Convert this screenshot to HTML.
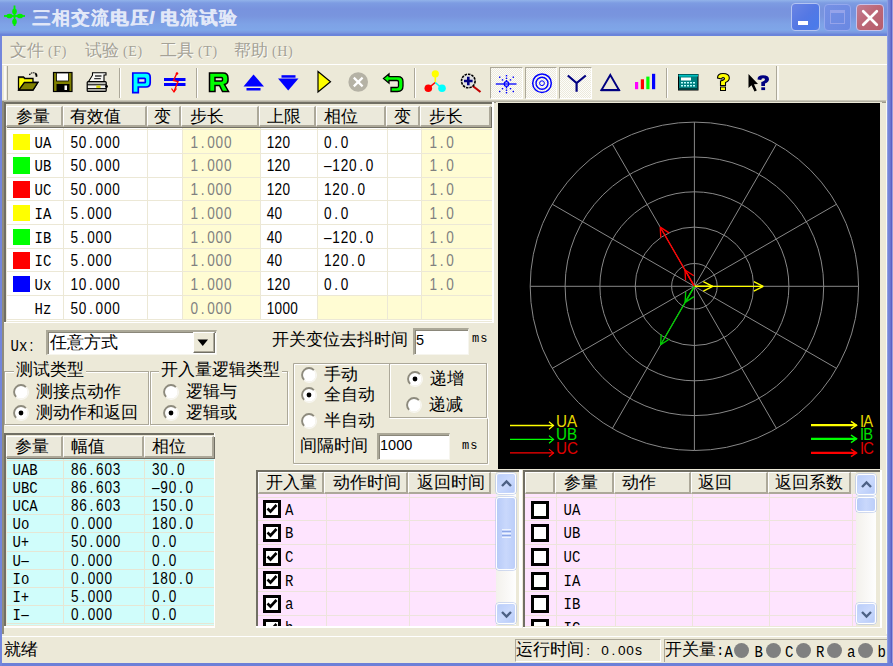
<!DOCTYPE html><html><head><meta charset="utf-8"><style>
html,body{margin:0;padding:0;}
body{width:893px;height:666px;overflow:hidden;position:relative;background:#ece9d8;font-family:'Liberation Sans',sans-serif;font-size:16.6px;color:#000;}
div{box-sizing:border-box;}
.hd{position:absolute;background:#ebe9db;border-top:1px solid #fff;border-left:1px solid #fff;border-right:2px solid #aca899;border-bottom:2px solid #aca899;box-shadow:1px 1px 0 #716f64;}
.m{font-family:'Liberation Mono',monospace;font-size:14px;}
.s{font-family:'Liberation Sans',sans-serif;font-size:14px;}
</style></head><body>
<div style="position:absolute;left:0px;top:0px;width:893px;height:666px;background:#7b8fe0;"></div>
<div style="position:absolute;left:1.5px;top:36px;width:885.5px;height:627px;background:#ece9d8;"></div>
<div style="position:absolute;left:0px;top:0px;width:887px;height:36px;background:linear-gradient(to bottom,#92b3ea 0px,#7d9ce2 3px,#7893de 9px,#7995de 16px,#7ea2e6 24px,#7fa6e8 30px,#7a98e0 32.5px,#6a84da 34.5px,#6a84da 36px);"></div>
<svg style="position:absolute;left:0;top:0" width="30" height="32" viewBox="0 0 30 32">
<g fill="#00ee00">
<rect x="13.6" y="5.5" width="1.8" height="20.5"/>
<rect x="4" y="15.1" width="21" height="1.8"/>
<ellipse cx="14.5" cy="11.5" rx="2.3" ry="3"/>
<ellipse cx="14.5" cy="21.7" rx="2.3" ry="3"/>
<ellipse cx="9.5" cy="16" rx="3" ry="2.3"/>
<ellipse cx="20" cy="16" rx="3" ry="2.3"/>
</g></svg>
<div style="position:absolute;left:32px;top:7.2px;white-space:nowrap;line-height:22px;font-size:17.8px;font-weight:bold;color:#e2e8f8;letter-spacing:1.6px;text-shadow:0.6px 0 0 #e2e8f8;">三相交流电压<span style='font-size:19px;margin-left:-0.5px;margin-right:4px'>/</span>电流试验</div>
<div style="position:absolute;left:791.2px;top:3.2px;width:29.2px;height:28.2px;border:1.5px solid #b3c4f2;border-radius:4px;background:linear-gradient(135deg,#6a84e4 0%,#5478e4 50%,#4a7aea 85%,#5a7de0 100%);"></div>
<div style="position:absolute;left:798px;top:21px;width:10px;height:4px;background:#fff;"></div>
<div style="position:absolute;left:824.1px;top:3.7px;width:27px;height:27.4px;border:1.5px solid #94a8ee;border-radius:4px;background:linear-gradient(135deg,#7590e4,#6a88e2);"></div>
<div style="position:absolute;left:830.2px;top:9.8px;width:15.1px;height:14.7px;border:1.5px solid #95a3ea;border-top:3px solid #95a3ea;"></div>
<div style="position:absolute;left:856px;top:3.7px;width:27.8px;height:27.4px;border:1.5px solid #c8c2ea;border-radius:4px;background:linear-gradient(135deg,#c27d92 0%,#bd6878 45%,#b65d6b 100%);"></div>
<svg style="position:absolute;left:856px;top:3.7px" width="28" height="28" viewBox="0 0 28 28"><path d="M7.2 7.2 L20.8 20.8 M20.8 7.2 L7.2 20.8" stroke="#fff" stroke-width="2.7" stroke-linecap="round"/></svg>
<div style="position:absolute;left:10px;top:42.5px;white-space:nowrap;line-height:16px;color:#a4a196;text-shadow:0.6px 0.6px 0 #fbfbf6;">文件<span style="font-family:'Liberation Serif';font-size:14px;margin-left:4px;letter-spacing:0.6px;">(F)</span></div>
<div style="position:absolute;left:85px;top:42.5px;white-space:nowrap;line-height:16px;color:#a4a196;text-shadow:0.6px 0.6px 0 #fbfbf6;">试验<span style="font-family:'Liberation Serif';font-size:14px;margin-left:4px;letter-spacing:0.6px;">(E)</span></div>
<div style="position:absolute;left:160px;top:42.5px;white-space:nowrap;line-height:16px;color:#a4a196;text-shadow:0.6px 0.6px 0 #fbfbf6;">工具<span style="font-family:'Liberation Serif';font-size:14px;margin-left:4px;letter-spacing:0.6px;">(T)</span></div>
<div style="position:absolute;left:234px;top:42.5px;white-space:nowrap;line-height:16px;color:#a4a196;text-shadow:0.6px 0.6px 0 #fbfbf6;">帮助<span style="font-family:'Liberation Serif';font-size:14px;margin-left:4px;letter-spacing:0.6px;">(H)</span></div>
<div style="position:absolute;left:1.5px;top:64px;width:885.5px;height:1px;background:#fff;"></div>
<div style="position:absolute;left:3.8px;top:66px;width:2.6px;height:34px;background:#fbfaf4;"></div>
<div style="position:absolute;left:6.5px;top:66px;width:1px;height:34px;background:#aca899;"></div>
<div style="position:absolute;left:1.5px;top:100.3px;width:884.5px;height:2.7px;background:linear-gradient(to bottom,#d6d3c4,#8f8c7e);"></div>
<div style="position:absolute;left:119px;top:68px;width:1px;height:30px;background:#aca899;"></div>
<div style="position:absolute;left:120px;top:68px;width:1px;height:30px;background:#fff;"></div>
<div style="position:absolute;left:196px;top:68px;width:1px;height:30px;background:#aca899;"></div>
<div style="position:absolute;left:197px;top:68px;width:1px;height:30px;background:#fff;"></div>
<div style="position:absolute;left:413.5px;top:68px;width:1px;height:30px;background:#aca899;"></div>
<div style="position:absolute;left:414.5px;top:68px;width:1px;height:30px;background:#fff;"></div>
<div style="position:absolute;left:666px;top:68px;width:1px;height:30px;background:#aca899;"></div>
<div style="position:absolute;left:667px;top:68px;width:1px;height:30px;background:#fff;"></div>
<div style="position:absolute;left:776.3px;top:66px;width:1px;height:34px;background:#aca899;"></div>
<div style="position:absolute;left:777.3px;top:66px;width:1.6px;height:34px;background:#fbfaf4;"></div>
<div style="position:absolute;left:490px;top:67px;width:32.5px;height:32px;background:repeating-conic-gradient(#fdfdfa 0 25%,#ece9dc 0 50%) 0 0/2px 2px;border:1px solid #fff;border-top-color:#aca899;border-left-color:#aca899;"></div>
<div style="position:absolute;left:524.5px;top:67px;width:32.5px;height:32px;background:repeating-conic-gradient(#fdfdfa 0 25%,#ece9dc 0 50%) 0 0/2px 2px;border:1px solid #fff;border-top-color:#aca899;border-left-color:#aca899;"></div>
<div style="position:absolute;left:559px;top:67px;width:32.5px;height:32px;background:repeating-conic-gradient(#fdfdfa 0 25%,#ece9dc 0 50%) 0 0/2px 2px;border:1px solid #fff;border-top-color:#aca899;border-left-color:#aca899;"></div>
<svg style="position:absolute;left:0;top:0" width="893" height="110" viewBox="0 0 893 110">
<!-- folder -->
<path d="M18.5 77 L23.5 77 L24.8 78.3 L33 78.3 L33 82.5 L37.8 82.5 L33 90 L18.5 90 Z" fill="#808000" stroke="#000" stroke-width="1.3"/>
<path d="M19.3 78.2 L23.2 78.2 L24.4 79.4 L32.2 79.4 L32.2 82 L24.2 82 L19.3 88.5 Z" fill="#ffff00"/>
<path d="M24.4 82.5 L37.8 82.5 L33 90 L18.8 90 Z" fill="#808000" stroke="#000" stroke-width="1.3"/>
<path d="M29.3 74.8 Q32 71.8 35.2 73.2" fill="none" stroke="#000" stroke-width="1.1" stroke-dasharray="1.5 0.7"/>
<path d="M35.2 73.2 Q37 74.5 36.3 76.8" fill="none" stroke="#000" stroke-width="1.8"/>
<!-- floppy -->
<rect x="53.5" y="72.5" width="18.5" height="19" fill="#808000" stroke="#000" stroke-width="1.2"/>
<rect x="56.5" y="73" width="12" height="8" fill="#fff" stroke="#000" stroke-width="0.8"/>
<rect x="56.5" y="84" width="13" height="7.5" fill="#000"/>
<rect x="64.5" y="85.5" width="2.5" height="4.5" fill="#fff"/>
<!-- printer -->
<path d="M92.5 72.8 L106 72.8 L106 75 L104 75 L104 81.5 L88.6 81.5 L92.5 75.2 Z" fill="#f8f8f4" stroke="#000" stroke-width="1.1"/>
<path d="M95 76 L101.5 76 M94.2 78.6 L100.8 78.6" stroke="#333" stroke-width="1.3"/>
<rect x="87.2" y="81.6" width="19" height="9.8" rx="1" fill="#c4c4bc" stroke="#000" stroke-width="1.2"/>
<rect x="88" y="85.2" width="17.5" height="3" fill="#f4f4ee"/>
<path d="M87.2 84.8 L106.2 84.8 M87.2 88.6 L106.2 88.6" stroke="#000" stroke-width="1"/>
<rect x="96.3" y="85.6" width="4.2" height="2.3" fill="#d4d400"/>
<circle cx="106.5" cy="86.5" r="1.4" fill="#000"/>
<!-- P -->
<path d="M132.8 73 L146 73 Q150.2 73 150.2 77.2 L150.2 82.8 Q150.2 87 146 87 L138.3 87 L138.3 92.6 L132.8 92.6 Z M138.3 78.3 L138.3 82.7 L144.6 82.7 Q145.3 82.7 145.3 82 L145.3 79 Q145.3 78.3 144.6 78.3 Z" fill="#00ffff" stroke="#0000ff" stroke-width="1.7" fill-rule="evenodd"/>
<!-- not-equal with lightning -->
<rect x="164" y="78" width="21.5" height="3" fill="#0000ff"/>
<rect x="164" y="83" width="21.5" height="3" fill="#0000ff"/>
<path d="M177 73 L173.5 80.5 L178 81.5 L174 91.5" fill="none" stroke="#ff0000" stroke-width="1.4"/>
<circle cx="177" cy="73.5" r="1.3" fill="#ff0000"/>
<path d="M171.5 88.5 L174 92 L176.5 88.5" fill="none" stroke="#ff0000" stroke-width="1.2"/>
<!-- R -->
<path d="M209.5 73 L223 73 Q228 73 228 78 L228 80.5 Q228 83.5 224.5 84.5 L228.5 91.5 L222.5 91.5 L219.5 85.5 L215 85.5 L215 91.5 L209.5 91.5 Z M215 77.5 L215 81 L221.5 81 Q222.5 81 222.5 80 L222.5 78.5 Q222.5 77.5 221.5 77.5 Z" fill="#00ff00" stroke="#000" stroke-width="1.5" fill-rule="evenodd"/>
<!-- up -->
<path d="M253.5 74.5 L264 86.5 L243.5 86.5 Z" fill="#0000ff"/>
<rect x="246.5" y="88" width="14" height="2.5" fill="#0000ff"/>
<!-- down -->
<rect x="281.5" y="75.2" width="14" height="2.5" fill="#0000ff"/>
<path d="M278 78.5 L298.5 78.5 L288.2 90.5 Z" fill="#0000ff"/>
<!-- play -->
<path d="M318 71.5 L330.5 81.8 L318 92 Z" fill="#ffff00" stroke="#000" stroke-width="1.2"/>
<!-- stop circle -->
<circle cx="358.2" cy="82" r="9.8" fill="#b5b2a5"/>
<path d="M353.8 77.6 L362.6 86.4 M362.6 77.6 L353.8 86.4" stroke="#fff" stroke-width="2.2"/>
<!-- return arrow -->
<path d="M383.5 78.5 L389 73.8 L389 76.6 L398 76.6 Q403 76.6 403 81.5 L403 86 Q403 91.5 397.5 91.5 L391 91.5 L391 87.5 L397 87.5 Q398.5 87.5 398.5 86 L398.5 81.8 Q398.5 80.5 397 80.5 L389 80.5 L389 83.2 Z" fill="#00ff00" stroke="#000" stroke-width="1.3"/>
<!-- tree -->
<path d="M435.3 74 L435.3 82.5" stroke="#ffff00" stroke-width="1.6"/>
<path d="M435.3 82.5 L428.3 88.2" stroke="#ff0000" stroke-width="1.6"/>
<path d="M435.3 82.5 L442 88.3" stroke="#00ffff" stroke-width="1.6"/>
<circle cx="435.3" cy="73.8" r="3.6" fill="#ffff00"/>
<circle cx="428.3" cy="88.2" r="3.8" fill="#ff0000"/>
<circle cx="442" cy="88.3" r="3.8" fill="#00ffff"/>
<!-- zoom -->
<path d="M471.5 85 L480.5 92" stroke="#c00000" stroke-width="2.2"/>
<circle cx="468.3" cy="81" r="6.8" fill="#e0e0e0" stroke="#000" stroke-width="1.6" stroke-dasharray="2.5 1"/>
<path d="M464 81 L472.6 81 M468.3 76.8 L468.3 85.2" stroke="#000080" stroke-width="2.6"/>
<!-- star (pressed) -->
<path d="M495.8 84 L516.5 84" stroke="#0000ff" stroke-width="1.3"/>
<circle cx="506.5" cy="84" r="2.3" fill="none" stroke="#0000ff" stroke-width="1.2"/>
<g fill="#0000ff">
<rect x="505.8" y="75" width="1.4" height="1.4"/><rect x="505.8" y="77.6" width="1.4" height="1.4"/><rect x="505.8" y="80" width="1.4" height="1.4"/>
<rect x="505.8" y="87" width="1.4" height="1.4"/><rect x="505.8" y="89.5" width="1.4" height="1.4"/><rect x="505.8" y="92" width="1.4" height="1.4"/>
<rect x="499" y="76.5" width="1.4" height="1.4"/><rect x="512.6" y="76.5" width="1.4" height="1.4"/>
<rect x="501.8" y="79.2" width="1.4" height="1.4"/><rect x="509.8" y="79.2" width="1.4" height="1.4"/>
<rect x="501.8" y="88" width="1.4" height="1.4"/><rect x="509.8" y="88" width="1.4" height="1.4"/>
<rect x="499" y="90.8" width="1.4" height="1.4"/><rect x="512.6" y="90.8" width="1.4" height="1.4"/>
</g>
<!-- concentric -->
<circle cx="542" cy="83.2" r="9.3" fill="none" stroke="#0000ff" stroke-width="1.5"/>
<circle cx="542" cy="83.2" r="6" fill="none" stroke="#0000ff" stroke-width="1.4"/>
<circle cx="542" cy="83.2" r="2.4" fill="none" stroke="#0000ff" stroke-width="1"/>
<!-- Y -->
<path d="M567.8 75.5 L576.6 83 L585.8 75.5 M576.6 83 L576.6 91.8" fill="none" stroke="#000080" stroke-width="2.2"/>
<!-- triangle -->
<path d="M610.3 75 L619 90 L601.5 90 Z" fill="none" stroke="#000080" stroke-width="1.9"/>
<rect x="600.8" y="89" width="19" height="2.2" fill="#000080"/>
<!-- bars -->
<rect x="635" y="82" width="3.2" height="7.2" fill="#ff00ff"/>
<rect x="640.8" y="79.3" width="3.2" height="9.9" fill="#ff0000"/>
<rect x="646.3" y="76.6" width="3.2" height="12.6" fill="#00ff00"/>
<rect x="652" y="73.8" width="3.2" height="15.4" fill="#0000ff"/>
<!-- calculator -->
<rect x="678.5" y="74.5" width="19.5" height="15.5" fill="#008080" stroke="#000" stroke-width="1"/>
<rect x="678.5" y="74.5" width="19.5" height="2" fill="#00c0c0"/>
<rect x="681" y="77.5" width="10" height="3" fill="#fff"/>
<g fill="#c0ffff"><rect x="681" y="82" width="2" height="1.5"/><rect x="684" y="82" width="2" height="1.5"/><rect x="687" y="82" width="2" height="1.5"/><rect x="690" y="82" width="2" height="1.5"/><rect x="693" y="82" width="2" height="1.5"/>
<rect x="681" y="85" width="2" height="1.5"/><rect x="684" y="85" width="2" height="1.5"/><rect x="687" y="85" width="2" height="1.5"/><rect x="690" y="85" width="2" height="1.5"/><rect x="693" y="85" width="2" height="1.5"/></g>
<rect x="678.5" y="88" width="19.5" height="2" fill="#004040"/>
<!-- yellow ? -->
<path d="M717.5 78 Q717.5 73.5 723 73.5 Q729.3 73.5 729.3 78 Q729.3 81 725.5 82.5 L725.5 85.5 L720.5 85.5 L720.5 81 Q724.5 80 724.5 78.5 Q724.5 77.5 723 77.5 Q721.8 77.5 721.8 79 Z" fill="#ffff00" stroke="#000" stroke-width="1.1"/>
<rect x="720.5" y="87" width="5" height="3.5" fill="#ffff00" stroke="#000" stroke-width="1"/>
<!-- pointer ? -->
<path d="M748.5 74 L748.5 88 L751.5 85.2 L754.5 91.5 L756.8 90.5 L754 84.3 L758 84 Z" fill="#000"/>
<path d="M757.5 79.5 Q757.5 75.3 763 75.3 Q769 75.3 769 79.3 Q769 82 765 83.5 L765 86 L761.3 86 L761.3 82 Q765 81 765 79.5 Q765 78.3 763 78.3 Q761.3 78.3 761.3 80 Z" fill="#000080"/>
<rect x="761.3" y="87.3" width="3.8" height="2.8" fill="#000080"/>
</svg>
<div style="position:absolute;left:2.2px;top:101px;width:1.6px;height:533px;background:#8f8c7e;"></div>
<div style="position:absolute;left:4px;top:102px;width:490px;height:221px;background:#ece9d8;border-left:2.5px solid #716f64;border-top:2.5px solid #716f64;box-shadow:inset 0 0 0 0 #000;"></div>
<div style="position:absolute;left:492px;top:102px;width:2px;height:221px;background:#fff;"></div>
<div style="position:absolute;left:4px;top:321.5px;width:490px;height:1.5px;background:#fff;"></div>
<div style="position:absolute;left:6.5px;top:127px;width:485.5px;height:193.5px;background:#fff;"></div>
<div style="position:absolute;left:181.5px;top:127px;width:78px;height:193px;background:#fffcd3;"></div>
<div style="position:absolute;left:420.5px;top:127px;width:71.5px;height:193px;background:#fffcd3;"></div>
<div style="position:absolute;left:316.5px;top:296.1px;width:175.5px;height:24px;background:#fffcd3;"></div>
<div style="position:absolute;left:6.5px;top:129.3px;width:485.5px;height:1px;background:#ece8d6;"></div>
<div style="position:absolute;left:6.5px;top:152.98px;width:485.5px;height:1px;background:#ece8d6;"></div>
<div style="position:absolute;left:6.5px;top:176.66px;width:485.5px;height:1px;background:#ece8d6;"></div>
<div style="position:absolute;left:6.5px;top:200.34px;width:485.5px;height:1px;background:#ece8d6;"></div>
<div style="position:absolute;left:6.5px;top:224.02px;width:485.5px;height:1px;background:#ece8d6;"></div>
<div style="position:absolute;left:6.5px;top:247.7px;width:485.5px;height:1px;background:#ece8d6;"></div>
<div style="position:absolute;left:6.5px;top:271.38px;width:485.5px;height:1px;background:#ece8d6;"></div>
<div style="position:absolute;left:6.5px;top:295.06px;width:485.5px;height:1px;background:#ece8d6;"></div>
<div style="position:absolute;left:6.5px;top:318.74px;width:485.5px;height:1px;background:#ece8d6;"></div>
<div style="position:absolute;left:63.3px;top:127px;width:1px;height:193px;background:#ece8d6;"></div>
<div style="position:absolute;left:147px;top:127px;width:1px;height:193px;background:#ece8d6;"></div>
<div style="position:absolute;left:181.5px;top:127px;width:1px;height:193px;background:#ece8d6;"></div>
<div style="position:absolute;left:259.5px;top:127px;width:1px;height:193px;background:#ece8d6;"></div>
<div style="position:absolute;left:316.5px;top:127px;width:1px;height:193px;background:#ece8d6;"></div>
<div style="position:absolute;left:386.5px;top:127px;width:1px;height:193px;background:#ece8d6;"></div>
<div style="position:absolute;left:420.5px;top:127px;width:1px;height:193px;background:#ece8d6;"></div>
<div class="hd" style="left:6px;top:105.5px;width:56.5px;height:21.5px;"></div>
<div style="position:absolute;left:15.5px;top:108.8px;white-space:nowrap;line-height:16px;font-size:16.6px;">参量</div>
<div class="hd" style="left:62.5px;top:105.5px;width:84.0px;height:21.5px;"></div>
<div style="position:absolute;left:70px;top:108.8px;white-space:nowrap;line-height:16px;font-size:16.6px;">有效值</div>
<div class="hd" style="left:146.5px;top:105.5px;width:34.0px;height:21.5px;"></div>
<div style="position:absolute;left:154px;top:108.8px;white-space:nowrap;line-height:16px;font-size:16.6px;">变</div>
<div class="hd" style="left:180.5px;top:105.5px;width:78.0px;height:21.5px;"></div>
<div style="position:absolute;left:190px;top:108.8px;white-space:nowrap;line-height:16px;font-size:16.6px;">步长</div>
<div class="hd" style="left:258.5px;top:105.5px;width:57.0px;height:21.5px;"></div>
<div style="position:absolute;left:267px;top:108.8px;white-space:nowrap;line-height:16px;font-size:16.6px;">上限</div>
<div class="hd" style="left:315.5px;top:105.5px;width:70.0px;height:21.5px;"></div>
<div style="position:absolute;left:324px;top:108.8px;white-space:nowrap;line-height:16px;font-size:16.6px;">相位</div>
<div class="hd" style="left:385.5px;top:105.5px;width:34.0px;height:21.5px;"></div>
<div style="position:absolute;left:394px;top:108.8px;white-space:nowrap;line-height:16px;font-size:16.6px;">变</div>
<div class="hd" style="left:419.5px;top:105.5px;width:71.0px;height:21.5px;"></div>
<div style="position:absolute;left:429px;top:108.8px;white-space:nowrap;line-height:16px;font-size:16.6px;">步长</div>
<div style="position:absolute;left:12.5px;top:133.8px;width:17px;height:16.5px;background:#ffff00;"></div>
<div style="position:absolute;left:34.5px;top:133.8px;white-space:nowrap;line-height:16px;transform:scaleY(1.17);"><span style="display:inline-block;width:8.4px;text-align:center;font-family:'Liberation Mono',monospace;font-size:14px;">U</span><span style="display:inline-block;width:8.4px;text-align:center;font-family:'Liberation Mono',monospace;font-size:14px;">A</span></div>
<div style="position:absolute;left:70px;top:133.8px;white-space:nowrap;line-height:16px;transform:scaleY(1.17);"><span style="display:inline-block;width:8.4px;text-align:center;font-family:'Liberation Sans',sans-serif;font-size:13.6px;">5</span><span style="display:inline-block;width:8.4px;text-align:center;font-family:'Liberation Sans',sans-serif;font-size:13.6px;">0</span><span style="display:inline-block;width:8.4px;text-align:center;font-family:'Liberation Sans',sans-serif;font-size:13.6px;">.</span><span style="display:inline-block;width:8.4px;text-align:center;font-family:'Liberation Sans',sans-serif;font-size:13.6px;">0</span><span style="display:inline-block;width:8.4px;text-align:center;font-family:'Liberation Sans',sans-serif;font-size:13.6px;">0</span><span style="display:inline-block;width:8.4px;text-align:center;font-family:'Liberation Sans',sans-serif;font-size:13.6px;">0</span></div>
<div style="position:absolute;left:190px;top:133.8px;white-space:nowrap;line-height:16px;transform:scaleY(1.17);color:#808080;"><span style="display:inline-block;width:8.4px;text-align:center;font-family:'Liberation Sans',sans-serif;font-size:13.6px;">1</span><span style="display:inline-block;width:8.4px;text-align:center;font-family:'Liberation Sans',sans-serif;font-size:13.6px;">.</span><span style="display:inline-block;width:8.4px;text-align:center;font-family:'Liberation Sans',sans-serif;font-size:13.6px;">0</span><span style="display:inline-block;width:8.4px;text-align:center;font-family:'Liberation Sans',sans-serif;font-size:13.6px;">0</span><span style="display:inline-block;width:8.4px;text-align:center;font-family:'Liberation Sans',sans-serif;font-size:13.6px;">0</span></div>
<div style="position:absolute;left:266.5px;top:133.8px;white-space:nowrap;line-height:16px;transform:scaleY(1.17);"><span style="display:inline-block;width:7.9px;text-align:center;font-family:'Liberation Sans',sans-serif;font-size:13.6px;">1</span><span style="display:inline-block;width:7.9px;text-align:center;font-family:'Liberation Sans',sans-serif;font-size:13.6px;">2</span><span style="display:inline-block;width:7.9px;text-align:center;font-family:'Liberation Sans',sans-serif;font-size:13.6px;">0</span></div>
<div style="position:absolute;left:323.5px;top:133.8px;white-space:nowrap;line-height:16px;transform:scaleY(1.17);"><span style="display:inline-block;width:8.4px;text-align:center;font-family:'Liberation Sans',sans-serif;font-size:13.6px;">0</span><span style="display:inline-block;width:8.4px;text-align:center;font-family:'Liberation Sans',sans-serif;font-size:13.6px;">.</span><span style="display:inline-block;width:8.4px;text-align:center;font-family:'Liberation Sans',sans-serif;font-size:13.6px;">0</span></div>
<div style="position:absolute;left:429px;top:133.8px;white-space:nowrap;line-height:16px;transform:scaleY(1.17);color:#808080;"><span style="display:inline-block;width:8.4px;text-align:center;font-family:'Liberation Sans',sans-serif;font-size:13.6px;">1</span><span style="display:inline-block;width:8.4px;text-align:center;font-family:'Liberation Sans',sans-serif;font-size:13.6px;">.</span><span style="display:inline-block;width:8.4px;text-align:center;font-family:'Liberation Sans',sans-serif;font-size:13.6px;">0</span></div>
<div style="position:absolute;left:12.5px;top:157.48px;width:17px;height:16.5px;background:#00ff00;"></div>
<div style="position:absolute;left:34.5px;top:157.48px;white-space:nowrap;line-height:16px;transform:scaleY(1.17);"><span style="display:inline-block;width:8.4px;text-align:center;font-family:'Liberation Mono',monospace;font-size:14px;">U</span><span style="display:inline-block;width:8.4px;text-align:center;font-family:'Liberation Mono',monospace;font-size:14px;">B</span></div>
<div style="position:absolute;left:70px;top:157.48px;white-space:nowrap;line-height:16px;transform:scaleY(1.17);"><span style="display:inline-block;width:8.4px;text-align:center;font-family:'Liberation Sans',sans-serif;font-size:13.6px;">5</span><span style="display:inline-block;width:8.4px;text-align:center;font-family:'Liberation Sans',sans-serif;font-size:13.6px;">0</span><span style="display:inline-block;width:8.4px;text-align:center;font-family:'Liberation Sans',sans-serif;font-size:13.6px;">.</span><span style="display:inline-block;width:8.4px;text-align:center;font-family:'Liberation Sans',sans-serif;font-size:13.6px;">0</span><span style="display:inline-block;width:8.4px;text-align:center;font-family:'Liberation Sans',sans-serif;font-size:13.6px;">0</span><span style="display:inline-block;width:8.4px;text-align:center;font-family:'Liberation Sans',sans-serif;font-size:13.6px;">0</span></div>
<div style="position:absolute;left:190px;top:157.48px;white-space:nowrap;line-height:16px;transform:scaleY(1.17);color:#808080;"><span style="display:inline-block;width:8.4px;text-align:center;font-family:'Liberation Sans',sans-serif;font-size:13.6px;">1</span><span style="display:inline-block;width:8.4px;text-align:center;font-family:'Liberation Sans',sans-serif;font-size:13.6px;">.</span><span style="display:inline-block;width:8.4px;text-align:center;font-family:'Liberation Sans',sans-serif;font-size:13.6px;">0</span><span style="display:inline-block;width:8.4px;text-align:center;font-family:'Liberation Sans',sans-serif;font-size:13.6px;">0</span><span style="display:inline-block;width:8.4px;text-align:center;font-family:'Liberation Sans',sans-serif;font-size:13.6px;">0</span></div>
<div style="position:absolute;left:266.5px;top:157.48px;white-space:nowrap;line-height:16px;transform:scaleY(1.17);"><span style="display:inline-block;width:7.9px;text-align:center;font-family:'Liberation Sans',sans-serif;font-size:13.6px;">1</span><span style="display:inline-block;width:7.9px;text-align:center;font-family:'Liberation Sans',sans-serif;font-size:13.6px;">2</span><span style="display:inline-block;width:7.9px;text-align:center;font-family:'Liberation Sans',sans-serif;font-size:13.6px;">0</span></div>
<div style="position:absolute;left:323.5px;top:157.48px;white-space:nowrap;line-height:16px;transform:scaleY(1.17);"><span style="display:inline-block;width:8.4px;text-align:center;font-family:'Liberation Sans',sans-serif;font-size:13.6px;">&ndash;</span><span style="display:inline-block;width:8.4px;text-align:center;font-family:'Liberation Sans',sans-serif;font-size:13.6px;">1</span><span style="display:inline-block;width:8.4px;text-align:center;font-family:'Liberation Sans',sans-serif;font-size:13.6px;">2</span><span style="display:inline-block;width:8.4px;text-align:center;font-family:'Liberation Sans',sans-serif;font-size:13.6px;">0</span><span style="display:inline-block;width:8.4px;text-align:center;font-family:'Liberation Sans',sans-serif;font-size:13.6px;">.</span><span style="display:inline-block;width:8.4px;text-align:center;font-family:'Liberation Sans',sans-serif;font-size:13.6px;">0</span></div>
<div style="position:absolute;left:429px;top:157.48px;white-space:nowrap;line-height:16px;transform:scaleY(1.17);color:#808080;"><span style="display:inline-block;width:8.4px;text-align:center;font-family:'Liberation Sans',sans-serif;font-size:13.6px;">1</span><span style="display:inline-block;width:8.4px;text-align:center;font-family:'Liberation Sans',sans-serif;font-size:13.6px;">.</span><span style="display:inline-block;width:8.4px;text-align:center;font-family:'Liberation Sans',sans-serif;font-size:13.6px;">0</span></div>
<div style="position:absolute;left:12.5px;top:181.16px;width:17px;height:16.5px;background:#ff0000;"></div>
<div style="position:absolute;left:34.5px;top:181.16px;white-space:nowrap;line-height:16px;transform:scaleY(1.17);"><span style="display:inline-block;width:8.4px;text-align:center;font-family:'Liberation Mono',monospace;font-size:14px;">U</span><span style="display:inline-block;width:8.4px;text-align:center;font-family:'Liberation Mono',monospace;font-size:14px;">C</span></div>
<div style="position:absolute;left:70px;top:181.16px;white-space:nowrap;line-height:16px;transform:scaleY(1.17);"><span style="display:inline-block;width:8.4px;text-align:center;font-family:'Liberation Sans',sans-serif;font-size:13.6px;">5</span><span style="display:inline-block;width:8.4px;text-align:center;font-family:'Liberation Sans',sans-serif;font-size:13.6px;">0</span><span style="display:inline-block;width:8.4px;text-align:center;font-family:'Liberation Sans',sans-serif;font-size:13.6px;">.</span><span style="display:inline-block;width:8.4px;text-align:center;font-family:'Liberation Sans',sans-serif;font-size:13.6px;">0</span><span style="display:inline-block;width:8.4px;text-align:center;font-family:'Liberation Sans',sans-serif;font-size:13.6px;">0</span><span style="display:inline-block;width:8.4px;text-align:center;font-family:'Liberation Sans',sans-serif;font-size:13.6px;">0</span></div>
<div style="position:absolute;left:190px;top:181.16px;white-space:nowrap;line-height:16px;transform:scaleY(1.17);color:#808080;"><span style="display:inline-block;width:8.4px;text-align:center;font-family:'Liberation Sans',sans-serif;font-size:13.6px;">1</span><span style="display:inline-block;width:8.4px;text-align:center;font-family:'Liberation Sans',sans-serif;font-size:13.6px;">.</span><span style="display:inline-block;width:8.4px;text-align:center;font-family:'Liberation Sans',sans-serif;font-size:13.6px;">0</span><span style="display:inline-block;width:8.4px;text-align:center;font-family:'Liberation Sans',sans-serif;font-size:13.6px;">0</span><span style="display:inline-block;width:8.4px;text-align:center;font-family:'Liberation Sans',sans-serif;font-size:13.6px;">0</span></div>
<div style="position:absolute;left:266.5px;top:181.16px;white-space:nowrap;line-height:16px;transform:scaleY(1.17);"><span style="display:inline-block;width:7.9px;text-align:center;font-family:'Liberation Sans',sans-serif;font-size:13.6px;">1</span><span style="display:inline-block;width:7.9px;text-align:center;font-family:'Liberation Sans',sans-serif;font-size:13.6px;">2</span><span style="display:inline-block;width:7.9px;text-align:center;font-family:'Liberation Sans',sans-serif;font-size:13.6px;">0</span></div>
<div style="position:absolute;left:323.5px;top:181.16px;white-space:nowrap;line-height:16px;transform:scaleY(1.17);"><span style="display:inline-block;width:8.4px;text-align:center;font-family:'Liberation Sans',sans-serif;font-size:13.6px;">1</span><span style="display:inline-block;width:8.4px;text-align:center;font-family:'Liberation Sans',sans-serif;font-size:13.6px;">2</span><span style="display:inline-block;width:8.4px;text-align:center;font-family:'Liberation Sans',sans-serif;font-size:13.6px;">0</span><span style="display:inline-block;width:8.4px;text-align:center;font-family:'Liberation Sans',sans-serif;font-size:13.6px;">.</span><span style="display:inline-block;width:8.4px;text-align:center;font-family:'Liberation Sans',sans-serif;font-size:13.6px;">0</span></div>
<div style="position:absolute;left:429px;top:181.16px;white-space:nowrap;line-height:16px;transform:scaleY(1.17);color:#808080;"><span style="display:inline-block;width:8.4px;text-align:center;font-family:'Liberation Sans',sans-serif;font-size:13.6px;">1</span><span style="display:inline-block;width:8.4px;text-align:center;font-family:'Liberation Sans',sans-serif;font-size:13.6px;">.</span><span style="display:inline-block;width:8.4px;text-align:center;font-family:'Liberation Sans',sans-serif;font-size:13.6px;">0</span></div>
<div style="position:absolute;left:12.5px;top:204.84px;width:17px;height:16.5px;background:#ffff00;"></div>
<div style="position:absolute;left:34.5px;top:204.84px;white-space:nowrap;line-height:16px;transform:scaleY(1.17);"><span style="display:inline-block;width:8.4px;text-align:center;font-family:'Liberation Mono',monospace;font-size:14px;">I</span><span style="display:inline-block;width:8.4px;text-align:center;font-family:'Liberation Mono',monospace;font-size:14px;">A</span></div>
<div style="position:absolute;left:70px;top:204.84px;white-space:nowrap;line-height:16px;transform:scaleY(1.17);"><span style="display:inline-block;width:8.4px;text-align:center;font-family:'Liberation Sans',sans-serif;font-size:13.6px;">5</span><span style="display:inline-block;width:8.4px;text-align:center;font-family:'Liberation Sans',sans-serif;font-size:13.6px;">.</span><span style="display:inline-block;width:8.4px;text-align:center;font-family:'Liberation Sans',sans-serif;font-size:13.6px;">0</span><span style="display:inline-block;width:8.4px;text-align:center;font-family:'Liberation Sans',sans-serif;font-size:13.6px;">0</span><span style="display:inline-block;width:8.4px;text-align:center;font-family:'Liberation Sans',sans-serif;font-size:13.6px;">0</span></div>
<div style="position:absolute;left:190px;top:204.84px;white-space:nowrap;line-height:16px;transform:scaleY(1.17);color:#808080;"><span style="display:inline-block;width:8.4px;text-align:center;font-family:'Liberation Sans',sans-serif;font-size:13.6px;">1</span><span style="display:inline-block;width:8.4px;text-align:center;font-family:'Liberation Sans',sans-serif;font-size:13.6px;">.</span><span style="display:inline-block;width:8.4px;text-align:center;font-family:'Liberation Sans',sans-serif;font-size:13.6px;">0</span><span style="display:inline-block;width:8.4px;text-align:center;font-family:'Liberation Sans',sans-serif;font-size:13.6px;">0</span><span style="display:inline-block;width:8.4px;text-align:center;font-family:'Liberation Sans',sans-serif;font-size:13.6px;">0</span></div>
<div style="position:absolute;left:266.5px;top:204.84px;white-space:nowrap;line-height:16px;transform:scaleY(1.17);"><span style="display:inline-block;width:7.9px;text-align:center;font-family:'Liberation Sans',sans-serif;font-size:13.6px;">4</span><span style="display:inline-block;width:7.9px;text-align:center;font-family:'Liberation Sans',sans-serif;font-size:13.6px;">0</span></div>
<div style="position:absolute;left:323.5px;top:204.84px;white-space:nowrap;line-height:16px;transform:scaleY(1.17);"><span style="display:inline-block;width:8.4px;text-align:center;font-family:'Liberation Sans',sans-serif;font-size:13.6px;">0</span><span style="display:inline-block;width:8.4px;text-align:center;font-family:'Liberation Sans',sans-serif;font-size:13.6px;">.</span><span style="display:inline-block;width:8.4px;text-align:center;font-family:'Liberation Sans',sans-serif;font-size:13.6px;">0</span></div>
<div style="position:absolute;left:429px;top:204.84px;white-space:nowrap;line-height:16px;transform:scaleY(1.17);color:#808080;"><span style="display:inline-block;width:8.4px;text-align:center;font-family:'Liberation Sans',sans-serif;font-size:13.6px;">1</span><span style="display:inline-block;width:8.4px;text-align:center;font-family:'Liberation Sans',sans-serif;font-size:13.6px;">.</span><span style="display:inline-block;width:8.4px;text-align:center;font-family:'Liberation Sans',sans-serif;font-size:13.6px;">0</span></div>
<div style="position:absolute;left:12.5px;top:228.52px;width:17px;height:16.5px;background:#00ff00;"></div>
<div style="position:absolute;left:34.5px;top:228.52px;white-space:nowrap;line-height:16px;transform:scaleY(1.17);"><span style="display:inline-block;width:8.4px;text-align:center;font-family:'Liberation Mono',monospace;font-size:14px;">I</span><span style="display:inline-block;width:8.4px;text-align:center;font-family:'Liberation Mono',monospace;font-size:14px;">B</span></div>
<div style="position:absolute;left:70px;top:228.52px;white-space:nowrap;line-height:16px;transform:scaleY(1.17);"><span style="display:inline-block;width:8.4px;text-align:center;font-family:'Liberation Sans',sans-serif;font-size:13.6px;">5</span><span style="display:inline-block;width:8.4px;text-align:center;font-family:'Liberation Sans',sans-serif;font-size:13.6px;">.</span><span style="display:inline-block;width:8.4px;text-align:center;font-family:'Liberation Sans',sans-serif;font-size:13.6px;">0</span><span style="display:inline-block;width:8.4px;text-align:center;font-family:'Liberation Sans',sans-serif;font-size:13.6px;">0</span><span style="display:inline-block;width:8.4px;text-align:center;font-family:'Liberation Sans',sans-serif;font-size:13.6px;">0</span></div>
<div style="position:absolute;left:190px;top:228.52px;white-space:nowrap;line-height:16px;transform:scaleY(1.17);color:#808080;"><span style="display:inline-block;width:8.4px;text-align:center;font-family:'Liberation Sans',sans-serif;font-size:13.6px;">1</span><span style="display:inline-block;width:8.4px;text-align:center;font-family:'Liberation Sans',sans-serif;font-size:13.6px;">.</span><span style="display:inline-block;width:8.4px;text-align:center;font-family:'Liberation Sans',sans-serif;font-size:13.6px;">0</span><span style="display:inline-block;width:8.4px;text-align:center;font-family:'Liberation Sans',sans-serif;font-size:13.6px;">0</span><span style="display:inline-block;width:8.4px;text-align:center;font-family:'Liberation Sans',sans-serif;font-size:13.6px;">0</span></div>
<div style="position:absolute;left:266.5px;top:228.52px;white-space:nowrap;line-height:16px;transform:scaleY(1.17);"><span style="display:inline-block;width:7.9px;text-align:center;font-family:'Liberation Sans',sans-serif;font-size:13.6px;">4</span><span style="display:inline-block;width:7.9px;text-align:center;font-family:'Liberation Sans',sans-serif;font-size:13.6px;">0</span></div>
<div style="position:absolute;left:323.5px;top:228.52px;white-space:nowrap;line-height:16px;transform:scaleY(1.17);"><span style="display:inline-block;width:8.4px;text-align:center;font-family:'Liberation Sans',sans-serif;font-size:13.6px;">&ndash;</span><span style="display:inline-block;width:8.4px;text-align:center;font-family:'Liberation Sans',sans-serif;font-size:13.6px;">1</span><span style="display:inline-block;width:8.4px;text-align:center;font-family:'Liberation Sans',sans-serif;font-size:13.6px;">2</span><span style="display:inline-block;width:8.4px;text-align:center;font-family:'Liberation Sans',sans-serif;font-size:13.6px;">0</span><span style="display:inline-block;width:8.4px;text-align:center;font-family:'Liberation Sans',sans-serif;font-size:13.6px;">.</span><span style="display:inline-block;width:8.4px;text-align:center;font-family:'Liberation Sans',sans-serif;font-size:13.6px;">0</span></div>
<div style="position:absolute;left:429px;top:228.52px;white-space:nowrap;line-height:16px;transform:scaleY(1.17);color:#808080;"><span style="display:inline-block;width:8.4px;text-align:center;font-family:'Liberation Sans',sans-serif;font-size:13.6px;">1</span><span style="display:inline-block;width:8.4px;text-align:center;font-family:'Liberation Sans',sans-serif;font-size:13.6px;">.</span><span style="display:inline-block;width:8.4px;text-align:center;font-family:'Liberation Sans',sans-serif;font-size:13.6px;">0</span></div>
<div style="position:absolute;left:12.5px;top:252.2px;width:17px;height:16.5px;background:#ff0000;"></div>
<div style="position:absolute;left:34.5px;top:252.2px;white-space:nowrap;line-height:16px;transform:scaleY(1.17);"><span style="display:inline-block;width:8.4px;text-align:center;font-family:'Liberation Mono',monospace;font-size:14px;">I</span><span style="display:inline-block;width:8.4px;text-align:center;font-family:'Liberation Mono',monospace;font-size:14px;">C</span></div>
<div style="position:absolute;left:70px;top:252.2px;white-space:nowrap;line-height:16px;transform:scaleY(1.17);"><span style="display:inline-block;width:8.4px;text-align:center;font-family:'Liberation Sans',sans-serif;font-size:13.6px;">5</span><span style="display:inline-block;width:8.4px;text-align:center;font-family:'Liberation Sans',sans-serif;font-size:13.6px;">.</span><span style="display:inline-block;width:8.4px;text-align:center;font-family:'Liberation Sans',sans-serif;font-size:13.6px;">0</span><span style="display:inline-block;width:8.4px;text-align:center;font-family:'Liberation Sans',sans-serif;font-size:13.6px;">0</span><span style="display:inline-block;width:8.4px;text-align:center;font-family:'Liberation Sans',sans-serif;font-size:13.6px;">0</span></div>
<div style="position:absolute;left:190px;top:252.2px;white-space:nowrap;line-height:16px;transform:scaleY(1.17);color:#808080;"><span style="display:inline-block;width:8.4px;text-align:center;font-family:'Liberation Sans',sans-serif;font-size:13.6px;">1</span><span style="display:inline-block;width:8.4px;text-align:center;font-family:'Liberation Sans',sans-serif;font-size:13.6px;">.</span><span style="display:inline-block;width:8.4px;text-align:center;font-family:'Liberation Sans',sans-serif;font-size:13.6px;">0</span><span style="display:inline-block;width:8.4px;text-align:center;font-family:'Liberation Sans',sans-serif;font-size:13.6px;">0</span><span style="display:inline-block;width:8.4px;text-align:center;font-family:'Liberation Sans',sans-serif;font-size:13.6px;">0</span></div>
<div style="position:absolute;left:266.5px;top:252.2px;white-space:nowrap;line-height:16px;transform:scaleY(1.17);"><span style="display:inline-block;width:7.9px;text-align:center;font-family:'Liberation Sans',sans-serif;font-size:13.6px;">4</span><span style="display:inline-block;width:7.9px;text-align:center;font-family:'Liberation Sans',sans-serif;font-size:13.6px;">0</span></div>
<div style="position:absolute;left:323.5px;top:252.2px;white-space:nowrap;line-height:16px;transform:scaleY(1.17);"><span style="display:inline-block;width:8.4px;text-align:center;font-family:'Liberation Sans',sans-serif;font-size:13.6px;">1</span><span style="display:inline-block;width:8.4px;text-align:center;font-family:'Liberation Sans',sans-serif;font-size:13.6px;">2</span><span style="display:inline-block;width:8.4px;text-align:center;font-family:'Liberation Sans',sans-serif;font-size:13.6px;">0</span><span style="display:inline-block;width:8.4px;text-align:center;font-family:'Liberation Sans',sans-serif;font-size:13.6px;">.</span><span style="display:inline-block;width:8.4px;text-align:center;font-family:'Liberation Sans',sans-serif;font-size:13.6px;">0</span></div>
<div style="position:absolute;left:429px;top:252.2px;white-space:nowrap;line-height:16px;transform:scaleY(1.17);color:#808080;"><span style="display:inline-block;width:8.4px;text-align:center;font-family:'Liberation Sans',sans-serif;font-size:13.6px;">1</span><span style="display:inline-block;width:8.4px;text-align:center;font-family:'Liberation Sans',sans-serif;font-size:13.6px;">.</span><span style="display:inline-block;width:8.4px;text-align:center;font-family:'Liberation Sans',sans-serif;font-size:13.6px;">0</span></div>
<div style="position:absolute;left:12.5px;top:275.88px;width:17px;height:16.5px;background:#0000ff;"></div>
<div style="position:absolute;left:34.5px;top:275.88px;white-space:nowrap;line-height:16px;transform:scaleY(1.17);"><span style="display:inline-block;width:8.4px;text-align:center;font-family:'Liberation Mono',monospace;font-size:14px;">U</span><span style="display:inline-block;width:8.4px;text-align:center;font-family:'Liberation Mono',monospace;font-size:14px;">x</span></div>
<div style="position:absolute;left:70px;top:275.88px;white-space:nowrap;line-height:16px;transform:scaleY(1.17);"><span style="display:inline-block;width:8.4px;text-align:center;font-family:'Liberation Sans',sans-serif;font-size:13.6px;">1</span><span style="display:inline-block;width:8.4px;text-align:center;font-family:'Liberation Sans',sans-serif;font-size:13.6px;">0</span><span style="display:inline-block;width:8.4px;text-align:center;font-family:'Liberation Sans',sans-serif;font-size:13.6px;">.</span><span style="display:inline-block;width:8.4px;text-align:center;font-family:'Liberation Sans',sans-serif;font-size:13.6px;">0</span><span style="display:inline-block;width:8.4px;text-align:center;font-family:'Liberation Sans',sans-serif;font-size:13.6px;">0</span><span style="display:inline-block;width:8.4px;text-align:center;font-family:'Liberation Sans',sans-serif;font-size:13.6px;">0</span></div>
<div style="position:absolute;left:190px;top:275.88px;white-space:nowrap;line-height:16px;transform:scaleY(1.17);color:#808080;"><span style="display:inline-block;width:8.4px;text-align:center;font-family:'Liberation Sans',sans-serif;font-size:13.6px;">1</span><span style="display:inline-block;width:8.4px;text-align:center;font-family:'Liberation Sans',sans-serif;font-size:13.6px;">.</span><span style="display:inline-block;width:8.4px;text-align:center;font-family:'Liberation Sans',sans-serif;font-size:13.6px;">0</span><span style="display:inline-block;width:8.4px;text-align:center;font-family:'Liberation Sans',sans-serif;font-size:13.6px;">0</span><span style="display:inline-block;width:8.4px;text-align:center;font-family:'Liberation Sans',sans-serif;font-size:13.6px;">0</span></div>
<div style="position:absolute;left:266.5px;top:275.88px;white-space:nowrap;line-height:16px;transform:scaleY(1.17);"><span style="display:inline-block;width:7.9px;text-align:center;font-family:'Liberation Sans',sans-serif;font-size:13.6px;">1</span><span style="display:inline-block;width:7.9px;text-align:center;font-family:'Liberation Sans',sans-serif;font-size:13.6px;">2</span><span style="display:inline-block;width:7.9px;text-align:center;font-family:'Liberation Sans',sans-serif;font-size:13.6px;">0</span></div>
<div style="position:absolute;left:323.5px;top:275.88px;white-space:nowrap;line-height:16px;transform:scaleY(1.17);"><span style="display:inline-block;width:8.4px;text-align:center;font-family:'Liberation Sans',sans-serif;font-size:13.6px;">0</span><span style="display:inline-block;width:8.4px;text-align:center;font-family:'Liberation Sans',sans-serif;font-size:13.6px;">.</span><span style="display:inline-block;width:8.4px;text-align:center;font-family:'Liberation Sans',sans-serif;font-size:13.6px;">0</span></div>
<div style="position:absolute;left:429px;top:275.88px;white-space:nowrap;line-height:16px;transform:scaleY(1.17);color:#808080;"><span style="display:inline-block;width:8.4px;text-align:center;font-family:'Liberation Sans',sans-serif;font-size:13.6px;">1</span><span style="display:inline-block;width:8.4px;text-align:center;font-family:'Liberation Sans',sans-serif;font-size:13.6px;">.</span><span style="display:inline-block;width:8.4px;text-align:center;font-family:'Liberation Sans',sans-serif;font-size:13.6px;">0</span></div>
<div style="position:absolute;left:34.5px;top:299.56px;white-space:nowrap;line-height:16px;transform:scaleY(1.17);"><span style="display:inline-block;width:8.4px;text-align:center;font-family:'Liberation Mono',monospace;font-size:14px;">H</span><span style="display:inline-block;width:8.4px;text-align:center;font-family:'Liberation Mono',monospace;font-size:14px;">z</span></div>
<div style="position:absolute;left:70px;top:299.56px;white-space:nowrap;line-height:16px;transform:scaleY(1.17);"><span style="display:inline-block;width:8.4px;text-align:center;font-family:'Liberation Sans',sans-serif;font-size:13.6px;">5</span><span style="display:inline-block;width:8.4px;text-align:center;font-family:'Liberation Sans',sans-serif;font-size:13.6px;">0</span><span style="display:inline-block;width:8.4px;text-align:center;font-family:'Liberation Sans',sans-serif;font-size:13.6px;">.</span><span style="display:inline-block;width:8.4px;text-align:center;font-family:'Liberation Sans',sans-serif;font-size:13.6px;">0</span><span style="display:inline-block;width:8.4px;text-align:center;font-family:'Liberation Sans',sans-serif;font-size:13.6px;">0</span><span style="display:inline-block;width:8.4px;text-align:center;font-family:'Liberation Sans',sans-serif;font-size:13.6px;">0</span></div>
<div style="position:absolute;left:190px;top:299.56px;white-space:nowrap;line-height:16px;transform:scaleY(1.17);color:#808080;"><span style="display:inline-block;width:8.4px;text-align:center;font-family:'Liberation Sans',sans-serif;font-size:13.6px;">0</span><span style="display:inline-block;width:8.4px;text-align:center;font-family:'Liberation Sans',sans-serif;font-size:13.6px;">.</span><span style="display:inline-block;width:8.4px;text-align:center;font-family:'Liberation Sans',sans-serif;font-size:13.6px;">0</span><span style="display:inline-block;width:8.4px;text-align:center;font-family:'Liberation Sans',sans-serif;font-size:13.6px;">0</span><span style="display:inline-block;width:8.4px;text-align:center;font-family:'Liberation Sans',sans-serif;font-size:13.6px;">0</span></div>
<div style="position:absolute;left:266.5px;top:299.56px;white-space:nowrap;line-height:16px;transform:scaleY(1.17);"><span style="display:inline-block;width:7.9px;text-align:center;font-family:'Liberation Sans',sans-serif;font-size:13.6px;">1</span><span style="display:inline-block;width:7.9px;text-align:center;font-family:'Liberation Sans',sans-serif;font-size:13.6px;">0</span><span style="display:inline-block;width:7.9px;text-align:center;font-family:'Liberation Sans',sans-serif;font-size:13.6px;">0</span><span style="display:inline-block;width:7.9px;text-align:center;font-family:'Liberation Sans',sans-serif;font-size:13.6px;">0</span></div>
<div style="position:absolute;left:10.5px;top:337px;white-space:nowrap;line-height:16px;transform:scaleY(1.17);"><span style="display:inline-block;width:8.4px;text-align:center;font-family:'Liberation Mono',monospace;font-size:14px;">U</span><span style="display:inline-block;width:8.4px;text-align:center;font-family:'Liberation Mono',monospace;font-size:14px;">x</span><span style="display:inline-block;width:8.4px;text-align:center;font-family:'Liberation Sans',sans-serif;font-size:13.6px;">:</span></div>
<div style="position:absolute;left:45.5px;top:329.5px;width:171px;height:25.5px;background:#fff;border-top:2px solid #aba898;border-left:2px solid #aba898;border-right:1px solid #f6f5ee;border-bottom:1px solid #f6f5ee;box-shadow:inset 1px 1px 0 #8a877a;"></div>
<div style="position:absolute;left:50px;top:334.5px;white-space:nowrap;line-height:16px;font-size:16.6px;">任意方式</div>
<div style="position:absolute;left:192.8px;top:332.3px;width:22px;height:20.8px;background:#ece9d8;border-top:1px solid #fff;border-left:1px solid #fff;border-right:1px solid #716f64;border-bottom:1px solid #716f64;box-shadow:inset -1px -1px 0 #aca899;"></div>
<svg style="position:absolute;left:197px;top:339px" width="12" height="8" viewBox="0 0 12 8"><path d="M0.5 0.5 L11 0.5 L5.75 7 Z" fill="#000"/></svg>
<div style="position:absolute;left:272.3px;top:331.8px;white-space:nowrap;line-height:16px;font-size:16.6px;">开关变位去抖时间</div>
<div style="position:absolute;left:413px;top:327.5px;width:55.5px;height:27.5px;background:#fff;border-top:2px solid #aba898;border-left:2px solid #aba898;border-right:1px solid #f6f5ee;border-bottom:1px solid #f6f5ee;box-shadow:inset 1px 1px 0 #8a877a;"></div>
<div style="position:absolute;left:416px;top:331.8px;white-space:nowrap;line-height:16px;font-family:'Liberation Sans',sans-serif;font-size:14.5px;">5</div>
<div style="position:absolute;left:472px;top:331px;white-space:nowrap;line-height:16px;font-family:'Liberation Mono',monospace;font-size:12px;letter-spacing:1px;">ms</div>
<div style="position:absolute;left:4px;top:371px;width:145px;height:54px;border:1px solid #aca899;box-shadow:1px 1px 0 #fff, inset 1px 1px 0 #fff;"></div>
<div style="position:absolute;left:14px;top:361.5px;white-space:nowrap;line-height:16px;font-size:16.6px;"><span style='background:#ece9d8;padding:0 2px'>测试类型</span></div>
<div style="position:absolute;left:150px;top:371px;width:138px;height:54px;border:1px solid #aca899;box-shadow:1px 1px 0 #fff, inset 1px 1px 0 #fff;"></div>
<div style="position:absolute;left:158.5px;top:361.5px;white-space:nowrap;line-height:16px;font-size:16.6px;"><span style='background:#ece9d8;padding:0 2px'>开入量逻辑类型</span></div>
<svg style="position:absolute;left:13px;top:383.5px" width="16" height="16" viewBox="0 0 16 16"><circle cx="8" cy="8" r="6.6" fill="#fff"/><path d="M3.1 12.9 A6.9 6.9 0 0 1 12.9 3.1" fill="none" stroke="#8d8a7d" stroke-width="1.9"/><path d="M13.2 3.2 A6.9 6.9 0 0 1 3.2 13.2" fill="none" stroke="#f7f6f0" stroke-width="1.5"/></svg>
<div style="position:absolute;left:35.5px;top:383.5px;white-space:nowrap;line-height:16px;font-size:16.6px;">测接点动作</div>
<svg style="position:absolute;left:13px;top:405px" width="16" height="16" viewBox="0 0 16 16"><circle cx="8" cy="8" r="6.6" fill="#fff"/><path d="M3.1 12.9 A6.9 6.9 0 0 1 12.9 3.1" fill="none" stroke="#8d8a7d" stroke-width="1.9"/><path d="M13.2 3.2 A6.9 6.9 0 0 1 3.2 13.2" fill="none" stroke="#f7f6f0" stroke-width="1.5"/><circle cx="8" cy="8" r="2.4" fill="#000"/></svg>
<div style="position:absolute;left:35.5px;top:405px;white-space:nowrap;line-height:16px;font-size:16.6px;">测动作和返回</div>
<svg style="position:absolute;left:163px;top:383.5px" width="16" height="16" viewBox="0 0 16 16"><circle cx="8" cy="8" r="6.6" fill="#fff"/><path d="M3.1 12.9 A6.9 6.9 0 0 1 12.9 3.1" fill="none" stroke="#8d8a7d" stroke-width="1.9"/><path d="M13.2 3.2 A6.9 6.9 0 0 1 3.2 13.2" fill="none" stroke="#f7f6f0" stroke-width="1.5"/></svg>
<div style="position:absolute;left:185.5px;top:383.5px;white-space:nowrap;line-height:16px;font-size:16.6px;">逻辑与</div>
<svg style="position:absolute;left:163px;top:405px" width="16" height="16" viewBox="0 0 16 16"><circle cx="8" cy="8" r="6.6" fill="#fff"/><path d="M3.1 12.9 A6.9 6.9 0 0 1 12.9 3.1" fill="none" stroke="#8d8a7d" stroke-width="1.9"/><path d="M13.2 3.2 A6.9 6.9 0 0 1 3.2 13.2" fill="none" stroke="#f7f6f0" stroke-width="1.5"/><circle cx="8" cy="8" r="2.4" fill="#000"/></svg>
<div style="position:absolute;left:185.5px;top:405px;white-space:nowrap;line-height:16px;font-size:16.6px;">逻辑或</div>
<svg style="position:absolute;left:0;top:0" width="893" height="666" viewBox="0 0 893 666"><path d="M293.5 463.5 L293.5 363.5 L389.5 363.5 M389.5 417.5 L487.5 417.5 L487.5 463.5 L293.5 463.5" fill="none" stroke="#aca899" stroke-width="1"/><path d="M294.5 462.5 L294.5 364.5 L389.5 364.5 M390.5 418.5 L486.5 418.5 M488.5 417.5 L488.5 464.5 L293.5 464.5" fill="none" stroke="#fff" stroke-width="1"/><rect x="389.5" y="363.5" width="97" height="54" fill="none" stroke="#aca899" stroke-width="1"/><path d="M390.5 416.5 L390.5 364.5 L485.5 364.5 M487.5 363.5 L487.5 418.5 L389.5 418.5" fill="none" stroke="#fff" stroke-width="1"/></svg>
<svg style="position:absolute;left:301px;top:367px" width="16" height="16" viewBox="0 0 16 16"><circle cx="8" cy="8" r="6.6" fill="#fff"/><path d="M3.1 12.9 A6.9 6.9 0 0 1 12.9 3.1" fill="none" stroke="#8d8a7d" stroke-width="1.9"/><path d="M13.2 3.2 A6.9 6.9 0 0 1 3.2 13.2" fill="none" stroke="#f7f6f0" stroke-width="1.5"/></svg>
<div style="position:absolute;left:323.5px;top:367px;white-space:nowrap;line-height:16px;font-size:16.6px;">手动</div>
<svg style="position:absolute;left:301px;top:387px" width="16" height="16" viewBox="0 0 16 16"><circle cx="8" cy="8" r="6.6" fill="#fff"/><path d="M3.1 12.9 A6.9 6.9 0 0 1 12.9 3.1" fill="none" stroke="#8d8a7d" stroke-width="1.9"/><path d="M13.2 3.2 A6.9 6.9 0 0 1 3.2 13.2" fill="none" stroke="#f7f6f0" stroke-width="1.5"/><circle cx="8" cy="8" r="2.4" fill="#000"/></svg>
<div style="position:absolute;left:323.5px;top:387px;white-space:nowrap;line-height:16px;font-size:16.6px;">全自动</div>
<svg style="position:absolute;left:301px;top:412.5px" width="16" height="16" viewBox="0 0 16 16"><circle cx="8" cy="8" r="6.6" fill="#fff"/><path d="M3.1 12.9 A6.9 6.9 0 0 1 12.9 3.1" fill="none" stroke="#8d8a7d" stroke-width="1.9"/><path d="M13.2 3.2 A6.9 6.9 0 0 1 3.2 13.2" fill="none" stroke="#f7f6f0" stroke-width="1.5"/></svg>
<div style="position:absolute;left:323.5px;top:412.5px;white-space:nowrap;line-height:16px;font-size:16.6px;">半自动</div>
<svg style="position:absolute;left:407px;top:370.5px" width="16" height="16" viewBox="0 0 16 16"><circle cx="8" cy="8" r="6.6" fill="#fff"/><path d="M3.1 12.9 A6.9 6.9 0 0 1 12.9 3.1" fill="none" stroke="#8d8a7d" stroke-width="1.9"/><path d="M13.2 3.2 A6.9 6.9 0 0 1 3.2 13.2" fill="none" stroke="#f7f6f0" stroke-width="1.5"/><circle cx="8" cy="8" r="2.4" fill="#000"/></svg>
<div style="position:absolute;left:429.5px;top:370.5px;white-space:nowrap;line-height:16px;font-size:16.6px;">递增</div>
<svg style="position:absolute;left:406px;top:397px" width="16" height="16" viewBox="0 0 16 16"><circle cx="8" cy="8" r="6.6" fill="#fff"/><path d="M3.1 12.9 A6.9 6.9 0 0 1 12.9 3.1" fill="none" stroke="#8d8a7d" stroke-width="1.9"/><path d="M13.2 3.2 A6.9 6.9 0 0 1 3.2 13.2" fill="none" stroke="#f7f6f0" stroke-width="1.5"/></svg>
<div style="position:absolute;left:428.5px;top:397px;white-space:nowrap;line-height:16px;font-size:16.6px;">递减</div>
<div style="position:absolute;left:300px;top:437.5px;white-space:nowrap;line-height:16px;font-size:16.6px;">间隔时间</div>
<div style="position:absolute;left:376.5px;top:432.5px;width:73px;height:27.5px;background:#fff;border-top:2px solid #aba898;border-left:2px solid #aba898;border-right:1px solid #f6f5ee;border-bottom:1px solid #f6f5ee;box-shadow:inset 1px 1px 0 #8a877a;"></div>
<div style="position:absolute;left:380px;top:436.8px;white-space:nowrap;line-height:16px;font-family:'Liberation Sans',sans-serif;font-size:14.5px;">1000</div>
<div style="position:absolute;left:462px;top:438px;white-space:nowrap;line-height:16px;font-family:'Liberation Mono',monospace;font-size:12px;letter-spacing:1px;">ms</div>
<div style="position:absolute;left:4px;top:432.5px;width:210.5px;height:194.5px;border-left:2.5px solid #716f64;border-top:2.5px solid #716f64;"></div>
<div style="position:absolute;left:213.5px;top:432.5px;width:1.5px;height:195px;background:#fff;"></div>
<div style="position:absolute;left:4px;top:626px;width:211px;height:1.5px;background:#fff;"></div>
<div style="position:absolute;left:6.5px;top:457px;width:207px;height:167.5px;background:#d0fdfb;"></div>
<div style="position:absolute;left:6.5px;top:459.5px;width:207px;height:1px;background:#e6e6d4;"></div>
<div style="position:absolute;left:6.5px;top:477.7px;width:207px;height:1px;background:#e6e6d4;"></div>
<div style="position:absolute;left:6.5px;top:495.9px;width:207px;height:1px;background:#e6e6d4;"></div>
<div style="position:absolute;left:6.5px;top:514.1px;width:207px;height:1px;background:#e6e6d4;"></div>
<div style="position:absolute;left:6.5px;top:532.3px;width:207px;height:1px;background:#e6e6d4;"></div>
<div style="position:absolute;left:6.5px;top:550.5px;width:207px;height:1px;background:#e6e6d4;"></div>
<div style="position:absolute;left:6.5px;top:568.7px;width:207px;height:1px;background:#e6e6d4;"></div>
<div style="position:absolute;left:6.5px;top:586.9px;width:207px;height:1px;background:#e6e6d4;"></div>
<div style="position:absolute;left:6.5px;top:605.1px;width:207px;height:1px;background:#e6e6d4;"></div>
<div style="position:absolute;left:6.5px;top:623.3px;width:207px;height:1px;background:#e6e6d4;"></div>
<div style="position:absolute;left:63.3px;top:457px;width:1px;height:167px;background:#e6e6d4;"></div>
<div style="position:absolute;left:144.4px;top:457px;width:1px;height:167px;background:#e6e6d4;"></div>
<div class="hd" style="left:6px;top:435.5px;width:56.5px;height:22.0px;"></div>
<div style="position:absolute;left:15px;top:438.8px;white-space:nowrap;line-height:16px;font-size:16.6px;">参量</div>
<div class="hd" style="left:62.5px;top:435.5px;width:81.0px;height:22.0px;"></div>
<div style="position:absolute;left:70.5px;top:438.8px;white-space:nowrap;line-height:16px;font-size:16.6px;">幅值</div>
<div class="hd" style="left:143.5px;top:435.5px;width:70.0px;height:22.0px;"></div>
<div style="position:absolute;left:151.5px;top:438.8px;white-space:nowrap;line-height:16px;font-size:16.6px;">相位</div>
<div style="position:absolute;left:12.5px;top:460.6px;white-space:nowrap;line-height:16px;transform:scaleY(1.17);"><span style="display:inline-block;width:8.4px;text-align:center;font-family:'Liberation Mono',monospace;font-size:14px;">U</span><span style="display:inline-block;width:8.4px;text-align:center;font-family:'Liberation Mono',monospace;font-size:14px;">A</span><span style="display:inline-block;width:8.4px;text-align:center;font-family:'Liberation Mono',monospace;font-size:14px;">B</span></div>
<div style="position:absolute;left:70.5px;top:460.6px;white-space:nowrap;line-height:16px;transform:scaleY(1.17);"><span style="display:inline-block;width:8.4px;text-align:center;font-family:'Liberation Sans',sans-serif;font-size:13.6px;">8</span><span style="display:inline-block;width:8.4px;text-align:center;font-family:'Liberation Sans',sans-serif;font-size:13.6px;">6</span><span style="display:inline-block;width:8.4px;text-align:center;font-family:'Liberation Sans',sans-serif;font-size:13.6px;">.</span><span style="display:inline-block;width:8.4px;text-align:center;font-family:'Liberation Sans',sans-serif;font-size:13.6px;">6</span><span style="display:inline-block;width:8.4px;text-align:center;font-family:'Liberation Sans',sans-serif;font-size:13.6px;">0</span><span style="display:inline-block;width:8.4px;text-align:center;font-family:'Liberation Sans',sans-serif;font-size:13.6px;">3</span></div>
<div style="position:absolute;left:151.5px;top:460.6px;white-space:nowrap;line-height:16px;transform:scaleY(1.17);"><span style="display:inline-block;width:8.4px;text-align:center;font-family:'Liberation Sans',sans-serif;font-size:13.6px;">3</span><span style="display:inline-block;width:8.4px;text-align:center;font-family:'Liberation Sans',sans-serif;font-size:13.6px;">0</span><span style="display:inline-block;width:8.4px;text-align:center;font-family:'Liberation Sans',sans-serif;font-size:13.6px;">.</span><span style="display:inline-block;width:8.4px;text-align:center;font-family:'Liberation Sans',sans-serif;font-size:13.6px;">0</span></div>
<div style="position:absolute;left:12.5px;top:478.8px;white-space:nowrap;line-height:16px;transform:scaleY(1.17);"><span style="display:inline-block;width:8.4px;text-align:center;font-family:'Liberation Mono',monospace;font-size:14px;">U</span><span style="display:inline-block;width:8.4px;text-align:center;font-family:'Liberation Mono',monospace;font-size:14px;">B</span><span style="display:inline-block;width:8.4px;text-align:center;font-family:'Liberation Mono',monospace;font-size:14px;">C</span></div>
<div style="position:absolute;left:70.5px;top:478.8px;white-space:nowrap;line-height:16px;transform:scaleY(1.17);"><span style="display:inline-block;width:8.4px;text-align:center;font-family:'Liberation Sans',sans-serif;font-size:13.6px;">8</span><span style="display:inline-block;width:8.4px;text-align:center;font-family:'Liberation Sans',sans-serif;font-size:13.6px;">6</span><span style="display:inline-block;width:8.4px;text-align:center;font-family:'Liberation Sans',sans-serif;font-size:13.6px;">.</span><span style="display:inline-block;width:8.4px;text-align:center;font-family:'Liberation Sans',sans-serif;font-size:13.6px;">6</span><span style="display:inline-block;width:8.4px;text-align:center;font-family:'Liberation Sans',sans-serif;font-size:13.6px;">0</span><span style="display:inline-block;width:8.4px;text-align:center;font-family:'Liberation Sans',sans-serif;font-size:13.6px;">3</span></div>
<div style="position:absolute;left:151.5px;top:478.8px;white-space:nowrap;line-height:16px;transform:scaleY(1.17);"><span style="display:inline-block;width:8.4px;text-align:center;font-family:'Liberation Sans',sans-serif;font-size:13.6px;">&ndash;</span><span style="display:inline-block;width:8.4px;text-align:center;font-family:'Liberation Sans',sans-serif;font-size:13.6px;">9</span><span style="display:inline-block;width:8.4px;text-align:center;font-family:'Liberation Sans',sans-serif;font-size:13.6px;">0</span><span style="display:inline-block;width:8.4px;text-align:center;font-family:'Liberation Sans',sans-serif;font-size:13.6px;">.</span><span style="display:inline-block;width:8.4px;text-align:center;font-family:'Liberation Sans',sans-serif;font-size:13.6px;">0</span></div>
<div style="position:absolute;left:12.5px;top:497.0px;white-space:nowrap;line-height:16px;transform:scaleY(1.17);"><span style="display:inline-block;width:8.4px;text-align:center;font-family:'Liberation Mono',monospace;font-size:14px;">U</span><span style="display:inline-block;width:8.4px;text-align:center;font-family:'Liberation Mono',monospace;font-size:14px;">C</span><span style="display:inline-block;width:8.4px;text-align:center;font-family:'Liberation Mono',monospace;font-size:14px;">A</span></div>
<div style="position:absolute;left:70.5px;top:497.0px;white-space:nowrap;line-height:16px;transform:scaleY(1.17);"><span style="display:inline-block;width:8.4px;text-align:center;font-family:'Liberation Sans',sans-serif;font-size:13.6px;">8</span><span style="display:inline-block;width:8.4px;text-align:center;font-family:'Liberation Sans',sans-serif;font-size:13.6px;">6</span><span style="display:inline-block;width:8.4px;text-align:center;font-family:'Liberation Sans',sans-serif;font-size:13.6px;">.</span><span style="display:inline-block;width:8.4px;text-align:center;font-family:'Liberation Sans',sans-serif;font-size:13.6px;">6</span><span style="display:inline-block;width:8.4px;text-align:center;font-family:'Liberation Sans',sans-serif;font-size:13.6px;">0</span><span style="display:inline-block;width:8.4px;text-align:center;font-family:'Liberation Sans',sans-serif;font-size:13.6px;">3</span></div>
<div style="position:absolute;left:151.5px;top:497.0px;white-space:nowrap;line-height:16px;transform:scaleY(1.17);"><span style="display:inline-block;width:8.4px;text-align:center;font-family:'Liberation Sans',sans-serif;font-size:13.6px;">1</span><span style="display:inline-block;width:8.4px;text-align:center;font-family:'Liberation Sans',sans-serif;font-size:13.6px;">5</span><span style="display:inline-block;width:8.4px;text-align:center;font-family:'Liberation Sans',sans-serif;font-size:13.6px;">0</span><span style="display:inline-block;width:8.4px;text-align:center;font-family:'Liberation Sans',sans-serif;font-size:13.6px;">.</span><span style="display:inline-block;width:8.4px;text-align:center;font-family:'Liberation Sans',sans-serif;font-size:13.6px;">0</span></div>
<div style="position:absolute;left:12.5px;top:515.2px;white-space:nowrap;line-height:16px;transform:scaleY(1.17);"><span style="display:inline-block;width:8.4px;text-align:center;font-family:'Liberation Mono',monospace;font-size:14px;">U</span><span style="display:inline-block;width:8.4px;text-align:center;font-family:'Liberation Mono',monospace;font-size:14px;">o</span></div>
<div style="position:absolute;left:70.5px;top:515.2px;white-space:nowrap;line-height:16px;transform:scaleY(1.17);"><span style="display:inline-block;width:8.4px;text-align:center;font-family:'Liberation Sans',sans-serif;font-size:13.6px;">0</span><span style="display:inline-block;width:8.4px;text-align:center;font-family:'Liberation Sans',sans-serif;font-size:13.6px;">.</span><span style="display:inline-block;width:8.4px;text-align:center;font-family:'Liberation Sans',sans-serif;font-size:13.6px;">0</span><span style="display:inline-block;width:8.4px;text-align:center;font-family:'Liberation Sans',sans-serif;font-size:13.6px;">0</span><span style="display:inline-block;width:8.4px;text-align:center;font-family:'Liberation Sans',sans-serif;font-size:13.6px;">0</span></div>
<div style="position:absolute;left:151.5px;top:515.2px;white-space:nowrap;line-height:16px;transform:scaleY(1.17);"><span style="display:inline-block;width:8.4px;text-align:center;font-family:'Liberation Sans',sans-serif;font-size:13.6px;">1</span><span style="display:inline-block;width:8.4px;text-align:center;font-family:'Liberation Sans',sans-serif;font-size:13.6px;">8</span><span style="display:inline-block;width:8.4px;text-align:center;font-family:'Liberation Sans',sans-serif;font-size:13.6px;">0</span><span style="display:inline-block;width:8.4px;text-align:center;font-family:'Liberation Sans',sans-serif;font-size:13.6px;">.</span><span style="display:inline-block;width:8.4px;text-align:center;font-family:'Liberation Sans',sans-serif;font-size:13.6px;">0</span></div>
<div style="position:absolute;left:12.5px;top:533.4px;white-space:nowrap;line-height:16px;transform:scaleY(1.17);"><span style="display:inline-block;width:8.4px;text-align:center;font-family:'Liberation Mono',monospace;font-size:14px;">U</span><span style="display:inline-block;width:8.4px;text-align:center;font-family:'Liberation Sans',sans-serif;font-size:13.6px;">+</span></div>
<div style="position:absolute;left:70.5px;top:533.4px;white-space:nowrap;line-height:16px;transform:scaleY(1.17);"><span style="display:inline-block;width:8.4px;text-align:center;font-family:'Liberation Sans',sans-serif;font-size:13.6px;">5</span><span style="display:inline-block;width:8.4px;text-align:center;font-family:'Liberation Sans',sans-serif;font-size:13.6px;">0</span><span style="display:inline-block;width:8.4px;text-align:center;font-family:'Liberation Sans',sans-serif;font-size:13.6px;">.</span><span style="display:inline-block;width:8.4px;text-align:center;font-family:'Liberation Sans',sans-serif;font-size:13.6px;">0</span><span style="display:inline-block;width:8.4px;text-align:center;font-family:'Liberation Sans',sans-serif;font-size:13.6px;">0</span><span style="display:inline-block;width:8.4px;text-align:center;font-family:'Liberation Sans',sans-serif;font-size:13.6px;">0</span></div>
<div style="position:absolute;left:151.5px;top:533.4px;white-space:nowrap;line-height:16px;transform:scaleY(1.17);"><span style="display:inline-block;width:8.4px;text-align:center;font-family:'Liberation Sans',sans-serif;font-size:13.6px;">0</span><span style="display:inline-block;width:8.4px;text-align:center;font-family:'Liberation Sans',sans-serif;font-size:13.6px;">.</span><span style="display:inline-block;width:8.4px;text-align:center;font-family:'Liberation Sans',sans-serif;font-size:13.6px;">0</span></div>
<div style="position:absolute;left:12.5px;top:551.6px;white-space:nowrap;line-height:16px;transform:scaleY(1.17);"><span style="display:inline-block;width:8.4px;text-align:center;font-family:'Liberation Mono',monospace;font-size:14px;">U</span><span style="display:inline-block;width:8.4px;text-align:center;font-family:'Liberation Sans',sans-serif;font-size:13.6px;">&ndash;</span></div>
<div style="position:absolute;left:70.5px;top:551.6px;white-space:nowrap;line-height:16px;transform:scaleY(1.17);"><span style="display:inline-block;width:8.4px;text-align:center;font-family:'Liberation Sans',sans-serif;font-size:13.6px;">0</span><span style="display:inline-block;width:8.4px;text-align:center;font-family:'Liberation Sans',sans-serif;font-size:13.6px;">.</span><span style="display:inline-block;width:8.4px;text-align:center;font-family:'Liberation Sans',sans-serif;font-size:13.6px;">0</span><span style="display:inline-block;width:8.4px;text-align:center;font-family:'Liberation Sans',sans-serif;font-size:13.6px;">0</span><span style="display:inline-block;width:8.4px;text-align:center;font-family:'Liberation Sans',sans-serif;font-size:13.6px;">0</span></div>
<div style="position:absolute;left:151.5px;top:551.6px;white-space:nowrap;line-height:16px;transform:scaleY(1.17);"><span style="display:inline-block;width:8.4px;text-align:center;font-family:'Liberation Sans',sans-serif;font-size:13.6px;">0</span><span style="display:inline-block;width:8.4px;text-align:center;font-family:'Liberation Sans',sans-serif;font-size:13.6px;">.</span><span style="display:inline-block;width:8.4px;text-align:center;font-family:'Liberation Sans',sans-serif;font-size:13.6px;">0</span></div>
<div style="position:absolute;left:12.5px;top:569.8px;white-space:nowrap;line-height:16px;transform:scaleY(1.17);"><span style="display:inline-block;width:8.4px;text-align:center;font-family:'Liberation Mono',monospace;font-size:14px;">I</span><span style="display:inline-block;width:8.4px;text-align:center;font-family:'Liberation Mono',monospace;font-size:14px;">o</span></div>
<div style="position:absolute;left:70.5px;top:569.8px;white-space:nowrap;line-height:16px;transform:scaleY(1.17);"><span style="display:inline-block;width:8.4px;text-align:center;font-family:'Liberation Sans',sans-serif;font-size:13.6px;">0</span><span style="display:inline-block;width:8.4px;text-align:center;font-family:'Liberation Sans',sans-serif;font-size:13.6px;">.</span><span style="display:inline-block;width:8.4px;text-align:center;font-family:'Liberation Sans',sans-serif;font-size:13.6px;">0</span><span style="display:inline-block;width:8.4px;text-align:center;font-family:'Liberation Sans',sans-serif;font-size:13.6px;">0</span><span style="display:inline-block;width:8.4px;text-align:center;font-family:'Liberation Sans',sans-serif;font-size:13.6px;">0</span></div>
<div style="position:absolute;left:151.5px;top:569.8px;white-space:nowrap;line-height:16px;transform:scaleY(1.17);"><span style="display:inline-block;width:8.4px;text-align:center;font-family:'Liberation Sans',sans-serif;font-size:13.6px;">1</span><span style="display:inline-block;width:8.4px;text-align:center;font-family:'Liberation Sans',sans-serif;font-size:13.6px;">8</span><span style="display:inline-block;width:8.4px;text-align:center;font-family:'Liberation Sans',sans-serif;font-size:13.6px;">0</span><span style="display:inline-block;width:8.4px;text-align:center;font-family:'Liberation Sans',sans-serif;font-size:13.6px;">.</span><span style="display:inline-block;width:8.4px;text-align:center;font-family:'Liberation Sans',sans-serif;font-size:13.6px;">0</span></div>
<div style="position:absolute;left:12.5px;top:588.0px;white-space:nowrap;line-height:16px;transform:scaleY(1.17);"><span style="display:inline-block;width:8.4px;text-align:center;font-family:'Liberation Mono',monospace;font-size:14px;">I</span><span style="display:inline-block;width:8.4px;text-align:center;font-family:'Liberation Sans',sans-serif;font-size:13.6px;">+</span></div>
<div style="position:absolute;left:70.5px;top:588.0px;white-space:nowrap;line-height:16px;transform:scaleY(1.17);"><span style="display:inline-block;width:8.4px;text-align:center;font-family:'Liberation Sans',sans-serif;font-size:13.6px;">5</span><span style="display:inline-block;width:8.4px;text-align:center;font-family:'Liberation Sans',sans-serif;font-size:13.6px;">.</span><span style="display:inline-block;width:8.4px;text-align:center;font-family:'Liberation Sans',sans-serif;font-size:13.6px;">0</span><span style="display:inline-block;width:8.4px;text-align:center;font-family:'Liberation Sans',sans-serif;font-size:13.6px;">0</span><span style="display:inline-block;width:8.4px;text-align:center;font-family:'Liberation Sans',sans-serif;font-size:13.6px;">0</span></div>
<div style="position:absolute;left:151.5px;top:588.0px;white-space:nowrap;line-height:16px;transform:scaleY(1.17);"><span style="display:inline-block;width:8.4px;text-align:center;font-family:'Liberation Sans',sans-serif;font-size:13.6px;">0</span><span style="display:inline-block;width:8.4px;text-align:center;font-family:'Liberation Sans',sans-serif;font-size:13.6px;">.</span><span style="display:inline-block;width:8.4px;text-align:center;font-family:'Liberation Sans',sans-serif;font-size:13.6px;">0</span></div>
<div style="position:absolute;left:12.5px;top:606.2px;white-space:nowrap;line-height:16px;transform:scaleY(1.17);"><span style="display:inline-block;width:8.4px;text-align:center;font-family:'Liberation Mono',monospace;font-size:14px;">I</span><span style="display:inline-block;width:8.4px;text-align:center;font-family:'Liberation Sans',sans-serif;font-size:13.6px;">&ndash;</span></div>
<div style="position:absolute;left:70.5px;top:606.2px;white-space:nowrap;line-height:16px;transform:scaleY(1.17);"><span style="display:inline-block;width:8.4px;text-align:center;font-family:'Liberation Sans',sans-serif;font-size:13.6px;">0</span><span style="display:inline-block;width:8.4px;text-align:center;font-family:'Liberation Sans',sans-serif;font-size:13.6px;">.</span><span style="display:inline-block;width:8.4px;text-align:center;font-family:'Liberation Sans',sans-serif;font-size:13.6px;">0</span><span style="display:inline-block;width:8.4px;text-align:center;font-family:'Liberation Sans',sans-serif;font-size:13.6px;">0</span><span style="display:inline-block;width:8.4px;text-align:center;font-family:'Liberation Sans',sans-serif;font-size:13.6px;">0</span></div>
<div style="position:absolute;left:151.5px;top:606.2px;white-space:nowrap;line-height:16px;transform:scaleY(1.17);"><span style="display:inline-block;width:8.4px;text-align:center;font-family:'Liberation Sans',sans-serif;font-size:13.6px;">0</span><span style="display:inline-block;width:8.4px;text-align:center;font-family:'Liberation Sans',sans-serif;font-size:13.6px;">.</span><span style="display:inline-block;width:8.4px;text-align:center;font-family:'Liberation Sans',sans-serif;font-size:13.6px;">0</span></div>
<div style="position:absolute;left:495.5px;top:101.5px;width:386.5px;height:368px;background:#ece9d8;"></div>
<div style="position:absolute;left:497.5px;top:103px;width:382.5px;height:366px;background:#000;"></div>
<div style="position:absolute;left:886px;top:101px;width:1px;height:534px;background:#fbfbf3;"></div>
<div style="position:absolute;left:255.5px;top:469.5px;width:265px;height:158px;border-left:2px solid #716f64;border-top:2px solid #716f64;"></div>
<div style="position:absolute;left:518.5px;top:469.5px;width:3px;height:158px;background:#fff;"></div>
<div style="position:absolute;left:255.5px;top:626px;width:266px;height:1.5px;background:#fff;"></div>
<div class="hd" style="left:257.5px;top:472px;width:66.0px;height:21.5px;"></div>
<div style="position:absolute;left:266px;top:475.3px;white-space:nowrap;line-height:16px;font-size:16.6px;">开入量</div>
<div class="hd" style="left:323.5px;top:472px;width:84.0px;height:21.5px;"></div>
<div style="position:absolute;left:333px;top:475.3px;white-space:nowrap;line-height:16px;font-size:16.6px;">动作时间</div>
<div class="hd" style="left:407.5px;top:472px;width:83.5px;height:21.5px;"></div>
<div style="position:absolute;left:416.5px;top:475.3px;white-space:nowrap;line-height:16px;font-size:16.6px;">返回时间</div>
<div style="position:absolute;left:491px;top:472px;width:4.5px;height:21.5px;background:#ebe9db;border-top:1px solid #fff;"></div>
<div style="position:absolute;left:257.5px;top:493.5px;width:238px;height:132px;overflow:hidden">
<div style="position:absolute;left:0.0px;top:0.0px;width:238px;height:132px;background:#fee4fe;"></div>
<div style="position:absolute;left:0.0px;top:3.1px;width:238px;height:1px;background:#ede4dc;"></div>
<div style="position:absolute;left:0.0px;top:26.78px;width:238px;height:1px;background:#ede4dc;"></div>
<div style="position:absolute;left:0.0px;top:50.46px;width:238px;height:1px;background:#ede4dc;"></div>
<div style="position:absolute;left:0.0px;top:74.14px;width:238px;height:1px;background:#ede4dc;"></div>
<div style="position:absolute;left:0.0px;top:97.82px;width:238px;height:1px;background:#ede4dc;"></div>
<div style="position:absolute;left:0.0px;top:121.5px;width:238px;height:1px;background:#ede4dc;"></div>
<div style="position:absolute;left:68.0px;top:0.0px;width:1px;height:132px;background:#ede4dc;"></div>
<div style="position:absolute;left:151.5px;top:0.0px;width:1px;height:132px;background:#ede4dc;"></div>
<svg style="position:absolute;left:5.5px;top:6.8px" width="18" height="18" viewBox="0 0 18 18"><rect x="1.5" y="1.5" width="15" height="15" fill="#fff" stroke="#000" stroke-width="3"/><path d="M4.5 8.5 L7.5 11.5 L13.5 5" fill="none" stroke="#000" stroke-width="2.6"/></svg>
<div style="position:absolute;left:27.5px;top:7.0px;white-space:nowrap;line-height:16px;transform:scaleY(1.17);"><span style="display:inline-block;width:8.4px;text-align:center;font-family:'Liberation Mono',monospace;font-size:14px;">A</span></div>
<svg style="position:absolute;left:5.5px;top:30.48px" width="18" height="18" viewBox="0 0 18 18"><rect x="1.5" y="1.5" width="15" height="15" fill="#fff" stroke="#000" stroke-width="3"/><path d="M4.5 8.5 L7.5 11.5 L13.5 5" fill="none" stroke="#000" stroke-width="2.6"/></svg>
<div style="position:absolute;left:27.5px;top:30.68px;white-space:nowrap;line-height:16px;transform:scaleY(1.17);"><span style="display:inline-block;width:8.4px;text-align:center;font-family:'Liberation Mono',monospace;font-size:14px;">B</span></div>
<svg style="position:absolute;left:5.5px;top:54.16px" width="18" height="18" viewBox="0 0 18 18"><rect x="1.5" y="1.5" width="15" height="15" fill="#fff" stroke="#000" stroke-width="3"/><path d="M4.5 8.5 L7.5 11.5 L13.5 5" fill="none" stroke="#000" stroke-width="2.6"/></svg>
<div style="position:absolute;left:27.5px;top:54.36px;white-space:nowrap;line-height:16px;transform:scaleY(1.17);"><span style="display:inline-block;width:8.4px;text-align:center;font-family:'Liberation Mono',monospace;font-size:14px;">C</span></div>
<svg style="position:absolute;left:5.5px;top:77.84px" width="18" height="18" viewBox="0 0 18 18"><rect x="1.5" y="1.5" width="15" height="15" fill="#fff" stroke="#000" stroke-width="3"/><path d="M4.5 8.5 L7.5 11.5 L13.5 5" fill="none" stroke="#000" stroke-width="2.6"/></svg>
<div style="position:absolute;left:27.5px;top:78.04px;white-space:nowrap;line-height:16px;transform:scaleY(1.17);"><span style="display:inline-block;width:8.4px;text-align:center;font-family:'Liberation Mono',monospace;font-size:14px;">R</span></div>
<svg style="position:absolute;left:5.5px;top:101.52px" width="18" height="18" viewBox="0 0 18 18"><rect x="1.5" y="1.5" width="15" height="15" fill="#fff" stroke="#000" stroke-width="3"/><path d="M4.5 8.5 L7.5 11.5 L13.5 5" fill="none" stroke="#000" stroke-width="2.6"/></svg>
<div style="position:absolute;left:27.5px;top:101.72px;white-space:nowrap;line-height:16px;transform:scaleY(1.17);"><span style="display:inline-block;width:8.4px;text-align:center;font-family:'Liberation Mono',monospace;font-size:14px;">a</span></div>
<svg style="position:absolute;left:5.5px;top:125.2px" width="18" height="18" viewBox="0 0 18 18"><rect x="1.5" y="1.5" width="15" height="15" fill="#fff" stroke="#000" stroke-width="3"/><path d="M4.5 8.5 L7.5 11.5 L13.5 5" fill="none" stroke="#000" stroke-width="2.6"/></svg>
<div style="position:absolute;left:27.5px;top:125.4px;white-space:nowrap;line-height:16px;transform:scaleY(1.17);"><span style="display:inline-block;width:8.4px;text-align:center;font-family:'Liberation Mono',monospace;font-size:14px;">b</span></div>
</div>
<div style="position:absolute;left:495.8px;top:473px;width:20.5px;height:151.5px;background:linear-gradient(to right,#f3f1ec,#fefefe);"></div>
<div style="position:absolute;left:495.8px;top:473px;width:20.5px;height:21.30000000000001px;border:1px solid #fff;border-radius:3px;background:linear-gradient(135deg,#b9cdf9,#cbdafd 50%,#b5c9f8);box-shadow:inset 0 0 0 1px #c5d5fb, 0 0 0 0.5px #a8bcea;"></div>
<div style="position:absolute;left:495.8px;top:602.8px;width:20.5px;height:21.700000000000045px;border:1px solid #fff;border-radius:3px;background:linear-gradient(135deg,#b9cdf9,#cbdafd 50%,#b5c9f8);box-shadow:inset 0 0 0 1px #c5d5fb, 0 0 0 0.5px #a8bcea;"></div>
<svg style="position:absolute;left:495.8px;top:473px" width="21" height="22" viewBox="0 0 21 22"><path d="M6 13 L10.5 8.5 L15 13" fill="none" stroke="#4d6185" stroke-width="2.4"/></svg>
<svg style="position:absolute;left:495.8px;top:602.8px" width="21" height="22" viewBox="0 0 21 22"><path d="M6 9 L10.5 13.5 L15 9" fill="none" stroke="#4d6185" stroke-width="2.4"/></svg>
<div style="position:absolute;left:495.8px;top:496.8px;width:20.5px;height:72.80000000000001px;border:1px solid #fff;border-radius:3px;background:linear-gradient(to right,#b8cbf8,#c9d8fc 50%,#bccef9);box-shadow:0 0 0 0.5px #a8bcea;"></div>
<div style="position:absolute;left:501.8px;top:528.7px;width:9px;height:1px;background:#eef3fe;"></div>
<div style="position:absolute;left:501.8px;top:530.7px;width:9px;height:1px;background:#8ca6e6;"></div>
<div style="position:absolute;left:501.8px;top:532.7px;width:9px;height:1px;background:#eef3fe;"></div>
<div style="position:absolute;left:501.8px;top:534.7px;width:9px;height:1px;background:#8ca6e6;"></div>
<div style="position:absolute;left:501.8px;top:536.7px;width:9px;height:1px;background:#eef3fe;"></div>
<div style="position:absolute;left:522.5px;top:470px;width:358px;height:157.5px;border-left:2px solid #716f64;border-top:2px solid #716f64;"></div>
<div style="position:absolute;left:879.5px;top:470px;width:2px;height:158px;background:#fff;"></div>
<div style="position:absolute;left:522.5px;top:626.5px;width:359px;height:1.5px;background:#fff;"></div>
<div class="hd" style="left:524.5px;top:472px;width:30.5px;height:21.5px;"></div>
<div style="position:absolute;left:0px;top:475.3px;white-space:nowrap;line-height:16px;font-size:16.6px;"></div>
<div class="hd" style="left:555px;top:472px;width:58.5px;height:21.5px;"></div>
<div style="position:absolute;left:563.5px;top:475.3px;white-space:nowrap;line-height:16px;font-size:16.6px;">参量</div>
<div class="hd" style="left:613.5px;top:472px;width:77.0px;height:21.5px;"></div>
<div style="position:absolute;left:621.5px;top:475.3px;white-space:nowrap;line-height:16px;font-size:16.6px;">动作</div>
<div class="hd" style="left:690.5px;top:472px;width:77.0px;height:21.5px;"></div>
<div style="position:absolute;left:697.5px;top:475.3px;white-space:nowrap;line-height:16px;font-size:16.6px;">返回</div>
<div class="hd" style="left:767.5px;top:472px;width:83.0px;height:21.5px;"></div>
<div style="position:absolute;left:775px;top:475.3px;white-space:nowrap;line-height:16px;font-size:16.6px;">返回系数</div>
<div style="position:absolute;left:850.5px;top:472px;width:5px;height:21.5px;background:#ebe9db;border-top:1px solid #fff;"></div>
<div style="position:absolute;left:524.5px;top:493.5px;width:331px;height:132px;overflow:hidden">
<div style="position:absolute;left:0.0px;top:0.0px;width:331px;height:132px;background:#fee4fe;"></div>
<div style="position:absolute;left:0.0px;top:3.1px;width:331px;height:1px;background:#ede4dc;"></div>
<div style="position:absolute;left:0.0px;top:26.78px;width:331px;height:1px;background:#ede4dc;"></div>
<div style="position:absolute;left:0.0px;top:50.46px;width:331px;height:1px;background:#ede4dc;"></div>
<div style="position:absolute;left:0.0px;top:74.14px;width:331px;height:1px;background:#ede4dc;"></div>
<div style="position:absolute;left:0.0px;top:97.82px;width:331px;height:1px;background:#ede4dc;"></div>
<div style="position:absolute;left:0.0px;top:121.5px;width:331px;height:1px;background:#ede4dc;"></div>
<div style="position:absolute;left:31.5px;top:0.0px;width:1px;height:132px;background:#ede4dc;"></div>
<div style="position:absolute;left:90.0px;top:0.0px;width:1px;height:132px;background:#ede4dc;"></div>
<div style="position:absolute;left:167.0px;top:0.0px;width:1px;height:132px;background:#ede4dc;"></div>
<div style="position:absolute;left:244.0px;top:0.0px;width:1px;height:132px;background:#ede4dc;"></div>
<div style="position:absolute;left:327.0px;top:0.0px;width:1px;height:132px;background:#ede4dc;"></div>
<svg style="position:absolute;left:6.5px;top:7.0px" width="18" height="18" viewBox="0 0 18 18"><rect x="1.5" y="1.5" width="15" height="15" fill="#fff" stroke="#000" stroke-width="3"/></svg>
<div style="position:absolute;left:39.0px;top:7.0px;white-space:nowrap;line-height:16px;transform:scaleY(1.17);"><span style="display:inline-block;width:8.4px;text-align:center;font-family:'Liberation Mono',monospace;font-size:14px;">U</span><span style="display:inline-block;width:8.4px;text-align:center;font-family:'Liberation Mono',monospace;font-size:14px;">A</span></div>
<svg style="position:absolute;left:6.5px;top:30.68px" width="18" height="18" viewBox="0 0 18 18"><rect x="1.5" y="1.5" width="15" height="15" fill="#fff" stroke="#000" stroke-width="3"/></svg>
<div style="position:absolute;left:39.0px;top:30.68px;white-space:nowrap;line-height:16px;transform:scaleY(1.17);"><span style="display:inline-block;width:8.4px;text-align:center;font-family:'Liberation Mono',monospace;font-size:14px;">U</span><span style="display:inline-block;width:8.4px;text-align:center;font-family:'Liberation Mono',monospace;font-size:14px;">B</span></div>
<svg style="position:absolute;left:6.5px;top:54.36px" width="18" height="18" viewBox="0 0 18 18"><rect x="1.5" y="1.5" width="15" height="15" fill="#fff" stroke="#000" stroke-width="3"/></svg>
<div style="position:absolute;left:39.0px;top:54.36px;white-space:nowrap;line-height:16px;transform:scaleY(1.17);"><span style="display:inline-block;width:8.4px;text-align:center;font-family:'Liberation Mono',monospace;font-size:14px;">U</span><span style="display:inline-block;width:8.4px;text-align:center;font-family:'Liberation Mono',monospace;font-size:14px;">C</span></div>
<svg style="position:absolute;left:6.5px;top:78.04px" width="18" height="18" viewBox="0 0 18 18"><rect x="1.5" y="1.5" width="15" height="15" fill="#fff" stroke="#000" stroke-width="3"/></svg>
<div style="position:absolute;left:39.0px;top:78.04px;white-space:nowrap;line-height:16px;transform:scaleY(1.17);"><span style="display:inline-block;width:8.4px;text-align:center;font-family:'Liberation Mono',monospace;font-size:14px;">I</span><span style="display:inline-block;width:8.4px;text-align:center;font-family:'Liberation Mono',monospace;font-size:14px;">A</span></div>
<svg style="position:absolute;left:6.5px;top:101.72px" width="18" height="18" viewBox="0 0 18 18"><rect x="1.5" y="1.5" width="15" height="15" fill="#fff" stroke="#000" stroke-width="3"/></svg>
<div style="position:absolute;left:39.0px;top:101.72px;white-space:nowrap;line-height:16px;transform:scaleY(1.17);"><span style="display:inline-block;width:8.4px;text-align:center;font-family:'Liberation Mono',monospace;font-size:14px;">I</span><span style="display:inline-block;width:8.4px;text-align:center;font-family:'Liberation Mono',monospace;font-size:14px;">B</span></div>
<svg style="position:absolute;left:6.5px;top:125.4px" width="18" height="18" viewBox="0 0 18 18"><rect x="1.5" y="1.5" width="15" height="15" fill="#fff" stroke="#000" stroke-width="3"/></svg>
<div style="position:absolute;left:39.0px;top:125.4px;white-space:nowrap;line-height:16px;transform:scaleY(1.17);"><span style="display:inline-block;width:8.4px;text-align:center;font-family:'Liberation Mono',monospace;font-size:14px;">I</span><span style="display:inline-block;width:8.4px;text-align:center;font-family:'Liberation Mono',monospace;font-size:14px;">C</span></div>
</div>
<div style="position:absolute;left:855.5px;top:473.5px;width:20.5px;height:150.79999999999995px;background:linear-gradient(to right,#f3f1ec,#fefefe);"></div>
<div style="position:absolute;left:855.5px;top:473.5px;width:20.5px;height:21.30000000000001px;border:1px solid #fff;border-radius:3px;background:linear-gradient(135deg,#b9cdf9,#cbdafd 50%,#b5c9f8);box-shadow:inset 0 0 0 1px #c5d5fb, 0 0 0 0.5px #a8bcea;"></div>
<div style="position:absolute;left:855.5px;top:602.6px;width:20.5px;height:21.700000000000045px;border:1px solid #fff;border-radius:3px;background:linear-gradient(135deg,#b9cdf9,#cbdafd 50%,#b5c9f8);box-shadow:inset 0 0 0 1px #c5d5fb, 0 0 0 0.5px #a8bcea;"></div>
<svg style="position:absolute;left:855.5px;top:473.5px" width="21" height="22" viewBox="0 0 21 22"><path d="M6 13 L10.5 8.5 L15 13" fill="none" stroke="#4d6185" stroke-width="2.4"/></svg>
<svg style="position:absolute;left:855.5px;top:602.5999999999999px" width="21" height="22" viewBox="0 0 21 22"><path d="M6 9 L10.5 13.5 L15 9" fill="none" stroke="#4d6185" stroke-width="2.4"/></svg>
<div style="position:absolute;left:855.5px;top:497px;width:20.5px;height:14.5px;border:1px solid #fff;border-radius:3px;background:linear-gradient(to right,#b8cbf8,#c9d8fc 50%,#bccef9);box-shadow:0 0 0 0.5px #a8bcea;"></div>
<svg style="position:absolute;left:0;top:0" width="893" height="666" viewBox="0 0 893 666"><g fill="none" stroke="#888" stroke-width="1"><circle cx="694.4" cy="286.3" r="22.8"/><circle cx="694.4" cy="286.3" r="59.2"/><circle cx="694.4" cy="286.3" r="94.5"/><circle cx="694.4" cy="286.3" r="129.3"/><circle cx="694.4" cy="286.3" r="164.2"/><line x1="694.4" y1="286.3" x2="858.60" y2="286.30"/><line x1="694.4" y1="286.3" x2="836.60" y2="204.20"/><line x1="694.4" y1="286.3" x2="776.50" y2="144.10"/><line x1="694.4" y1="286.3" x2="694.40" y2="122.10"/><line x1="694.4" y1="286.3" x2="612.30" y2="144.10"/><line x1="694.4" y1="286.3" x2="552.20" y2="204.20"/><line x1="694.4" y1="286.3" x2="530.20" y2="286.30"/><line x1="694.4" y1="286.3" x2="552.20" y2="368.40"/><line x1="694.4" y1="286.3" x2="612.30" y2="428.50"/><line x1="694.4" y1="286.3" x2="694.40" y2="450.50"/><line x1="694.4" y1="286.3" x2="776.50" y2="428.50"/><line x1="694.4" y1="286.3" x2="836.60" y2="368.40"/></g><line x1="694.4" y1="286.3" x2="763.20" y2="286.30" stroke="#ffff00" stroke-width="1.35"/><line x1="763.20" y1="286.30" x2="753.84" y2="291.07" stroke="#ffff00" stroke-width="1.35"/><line x1="763.20" y1="286.30" x2="753.84" y2="281.53" stroke="#ffff00" stroke-width="1.35"/><line x1="694.4" y1="286.3" x2="660.25" y2="227.15" stroke="#ff0000" stroke-width="1.35"/><line x1="660.25" y1="227.15" x2="669.06" y2="232.87" stroke="#ff0000" stroke-width="1.35"/><line x1="660.25" y1="227.15" x2="660.80" y2="237.64" stroke="#ff0000" stroke-width="1.35"/><line x1="694.4" y1="286.3" x2="660.65" y2="344.76" stroke="#00cc00" stroke-width="1.35"/><line x1="660.65" y1="344.76" x2="661.20" y2="334.27" stroke="#00cc00" stroke-width="1.35"/><line x1="660.65" y1="344.76" x2="669.46" y2="339.04" stroke="#00cc00" stroke-width="1.35"/><line x1="694.4" y1="286.3" x2="712.70" y2="286.30" stroke="#ffff00" stroke-width="1.35"/><line x1="712.70" y1="286.30" x2="703.34" y2="291.07" stroke="#ffff00" stroke-width="1.35"/><line x1="712.70" y1="286.30" x2="703.34" y2="281.53" stroke="#ffff00" stroke-width="1.35"/><line x1="694.4" y1="286.3" x2="685.00" y2="270.02" stroke="#ff0000" stroke-width="1.35"/><line x1="685.00" y1="270.02" x2="693.81" y2="275.74" stroke="#ff0000" stroke-width="1.35"/><line x1="685.00" y1="270.02" x2="685.55" y2="280.50" stroke="#ff0000" stroke-width="1.35"/><line x1="694.4" y1="286.3" x2="685.15" y2="302.32" stroke="#00cc00" stroke-width="1.35"/><line x1="685.15" y1="302.32" x2="685.70" y2="291.84" stroke="#00cc00" stroke-width="1.35"/><line x1="685.15" y1="302.32" x2="693.96" y2="296.60" stroke="#00cc00" stroke-width="1.35"/><line x1="510" y1="425.5" x2="553.5" y2="425.5" stroke="#ffff00" stroke-width="1.3"/><path d="M549.0 421.7 L553.5 425.5 L549.0 429.3" fill="none" stroke="#ffff00" stroke-width="1.2"/><line x1="510" y1="439.4" x2="553.5" y2="439.4" stroke="#00ff00" stroke-width="1.3"/><path d="M549.0 435.59999999999997 L553.5 439.4 L549.0 443.2" fill="none" stroke="#00ff00" stroke-width="1.2"/><line x1="510" y1="452.9" x2="553.5" y2="452.9" stroke="#ff0000" stroke-width="1.3"/><path d="M549.0 449.09999999999997 L553.5 452.9 L549.0 456.7" fill="none" stroke="#ff0000" stroke-width="1.2"/><line x1="811" y1="425.2" x2="856.5" y2="425.2" stroke="#ffff00" stroke-width="2.2"/><path d="M851.0 421.4 L856.5 425.2 L851.0 429.0" fill="none" stroke="#ffff00" stroke-width="1.5"/><line x1="811" y1="438.8" x2="856.5" y2="438.8" stroke="#00ff00" stroke-width="2.2"/><path d="M851.0 435.0 L856.5 438.8 L851.0 442.6" fill="none" stroke="#00ff00" stroke-width="1.5"/><line x1="811" y1="452.9" x2="856.5" y2="452.9" stroke="#ff0000" stroke-width="2.2"/><path d="M851.0 449.09999999999997 L856.5 452.9 L851.0 456.7" fill="none" stroke="#ff0000" stroke-width="1.5"/></svg>
<div style="position:absolute;left:555.5px;top:413.5px;white-space:nowrap;line-height:16px;font-family:'Liberation Sans',sans-serif;font-size:16px;color:#e8d800;transform:scaleX(0.95);transform-origin:0 0;">UA</div>
<div style="position:absolute;left:555.5px;top:427.3px;white-space:nowrap;line-height:16px;font-family:'Liberation Sans',sans-serif;font-size:16px;color:#00e000;transform:scaleX(0.95);transform-origin:0 0;">UB</div>
<div style="position:absolute;left:555.5px;top:441px;white-space:nowrap;line-height:16px;font-family:'Liberation Sans',sans-serif;font-size:16px;color:#e00000;transform:scaleX(0.95);transform-origin:0 0;">UC</div>
<div style="position:absolute;left:860.3px;top:413.5px;white-space:nowrap;line-height:16px;font-family:'Liberation Sans',sans-serif;font-size:16px;color:#e8d800;letter-spacing:-1px;transform:scaleX(0.92);transform-origin:0 0;">IA</div>
<div style="position:absolute;left:860.3px;top:427.3px;white-space:nowrap;line-height:16px;font-family:'Liberation Sans',sans-serif;font-size:16px;color:#00e000;letter-spacing:-1px;transform:scaleX(0.92);transform-origin:0 0;">IB</div>
<div style="position:absolute;left:860.3px;top:441px;white-space:nowrap;line-height:16px;font-family:'Liberation Sans',sans-serif;font-size:16px;color:#e00000;letter-spacing:-1px;transform:scaleX(0.92);transform-origin:0 0;">IC</div>
<div style="position:absolute;left:1.5px;top:634px;width:885.5px;height:2px;background:#ece9d8;"></div>
<div style="position:absolute;left:1.5px;top:635.5px;width:885.5px;height:1px;background:#fff;"></div>
<div style="position:absolute;left:4px;top:642px;white-space:nowrap;line-height:16px;font-size:16.6px;">就绪</div>
<div style="position:absolute;left:514.5px;top:639px;width:146px;height:23px;border-top:1px solid #aca899;border-left:1px solid #aca899;border-right:1px solid #fff;border-bottom:1px solid #fff;"></div>
<div style="position:absolute;left:516px;top:642px;white-space:nowrap;line-height:16px;font-size:16.6px;">运行时间<span style="display:inline-block;width:8.4px;text-align:center;font-family:'Liberation Sans',sans-serif;font-size:13.6px;">:</span><span style="display:inline-block;width:8.4px;text-align:center;font-family:'Liberation Mono',monospace;font-size:14px;">&nbsp;</span><span style="display:inline-block;width:8.4px;text-align:center;font-family:'Liberation Sans',sans-serif;font-size:13.6px;">0</span><span style="display:inline-block;width:8.4px;text-align:center;font-family:'Liberation Sans',sans-serif;font-size:13.6px;">.</span><span style="display:inline-block;width:8.4px;text-align:center;font-family:'Liberation Sans',sans-serif;font-size:13.6px;">0</span><span style="display:inline-block;width:8.4px;text-align:center;font-family:'Liberation Sans',sans-serif;font-size:13.6px;">0</span><span style="display:inline-block;width:8.4px;text-align:center;font-family:'Liberation Mono',monospace;font-size:14px;">s</span></div>
<div style="position:absolute;left:663.5px;top:639px;width:224px;height:23px;border-top:1px solid #aca899;border-left:1px solid #aca899;"></div>
<div style="position:absolute;left:665px;top:642px;white-space:nowrap;line-height:16px;font-size:16.6px;">开关量<span style="font-family:'Liberation Mono',monospace;font-size:14px">:</span></div>
<div style="position:absolute;left:724.5px;top:642.5px;white-space:nowrap;line-height:16px;transform:scaleY(1.17);"><span style="display:inline-block;width:8.4px;text-align:center;font-family:'Liberation Mono',monospace;font-size:14px;">A</span></div>
<div style="position:absolute;left:734.4px;top:642.7px;width:15px;height:15px;background:#808080;border-radius:50%;"></div>
<div style="position:absolute;left:754.5px;top:642.5px;white-space:nowrap;line-height:16px;transform:scaleY(1.17);"><span style="display:inline-block;width:8.4px;text-align:center;font-family:'Liberation Mono',monospace;font-size:14px;">B</span></div>
<div style="position:absolute;left:765.6px;top:642.7px;width:15px;height:15px;background:#808080;border-radius:50%;"></div>
<div style="position:absolute;left:785px;top:642.5px;white-space:nowrap;line-height:16px;transform:scaleY(1.17);"><span style="display:inline-block;width:8.4px;text-align:center;font-family:'Liberation Mono',monospace;font-size:14px;">C</span></div>
<div style="position:absolute;left:795.6px;top:642.7px;width:15px;height:15px;background:#808080;border-radius:50%;"></div>
<div style="position:absolute;left:816px;top:642.5px;white-space:nowrap;line-height:16px;transform:scaleY(1.17);"><span style="display:inline-block;width:8.4px;text-align:center;font-family:'Liberation Mono',monospace;font-size:14px;">R</span></div>
<div style="position:absolute;left:826.9px;top:642.7px;width:15px;height:15px;background:#808080;border-radius:50%;"></div>
<div style="position:absolute;left:847px;top:642.5px;white-space:nowrap;line-height:16px;transform:scaleY(1.17);"><span style="display:inline-block;width:8.4px;text-align:center;font-family:'Liberation Mono',monospace;font-size:14px;">a</span></div>
<div style="position:absolute;left:858px;top:642.7px;width:15px;height:15px;background:#808080;border-radius:50%;"></div>
<div style="position:absolute;left:877.5px;top:642.5px;white-space:nowrap;line-height:16px;transform:scaleY(1.17);"><span style="display:inline-block;width:8.4px;text-align:center;font-family:'Liberation Mono',monospace;font-size:14px;">b</span></div>
<div style="position:absolute;left:887px;top:0px;width:6px;height:666px;background:linear-gradient(to right,#9aaae8 0px,#7585d8 1.5px,#6f7fd4 3px,#5a60c4 4.5px,#5a60c4 5px,#dcdcf5 6px);"></div>
<div style="position:absolute;left:0px;top:663px;width:893px;height:3px;background:#6c80d8;"></div>
<div style="position:absolute;left:0px;top:36px;width:1.5px;height:630px;background:#7386dc;"></div>
</body></html>
